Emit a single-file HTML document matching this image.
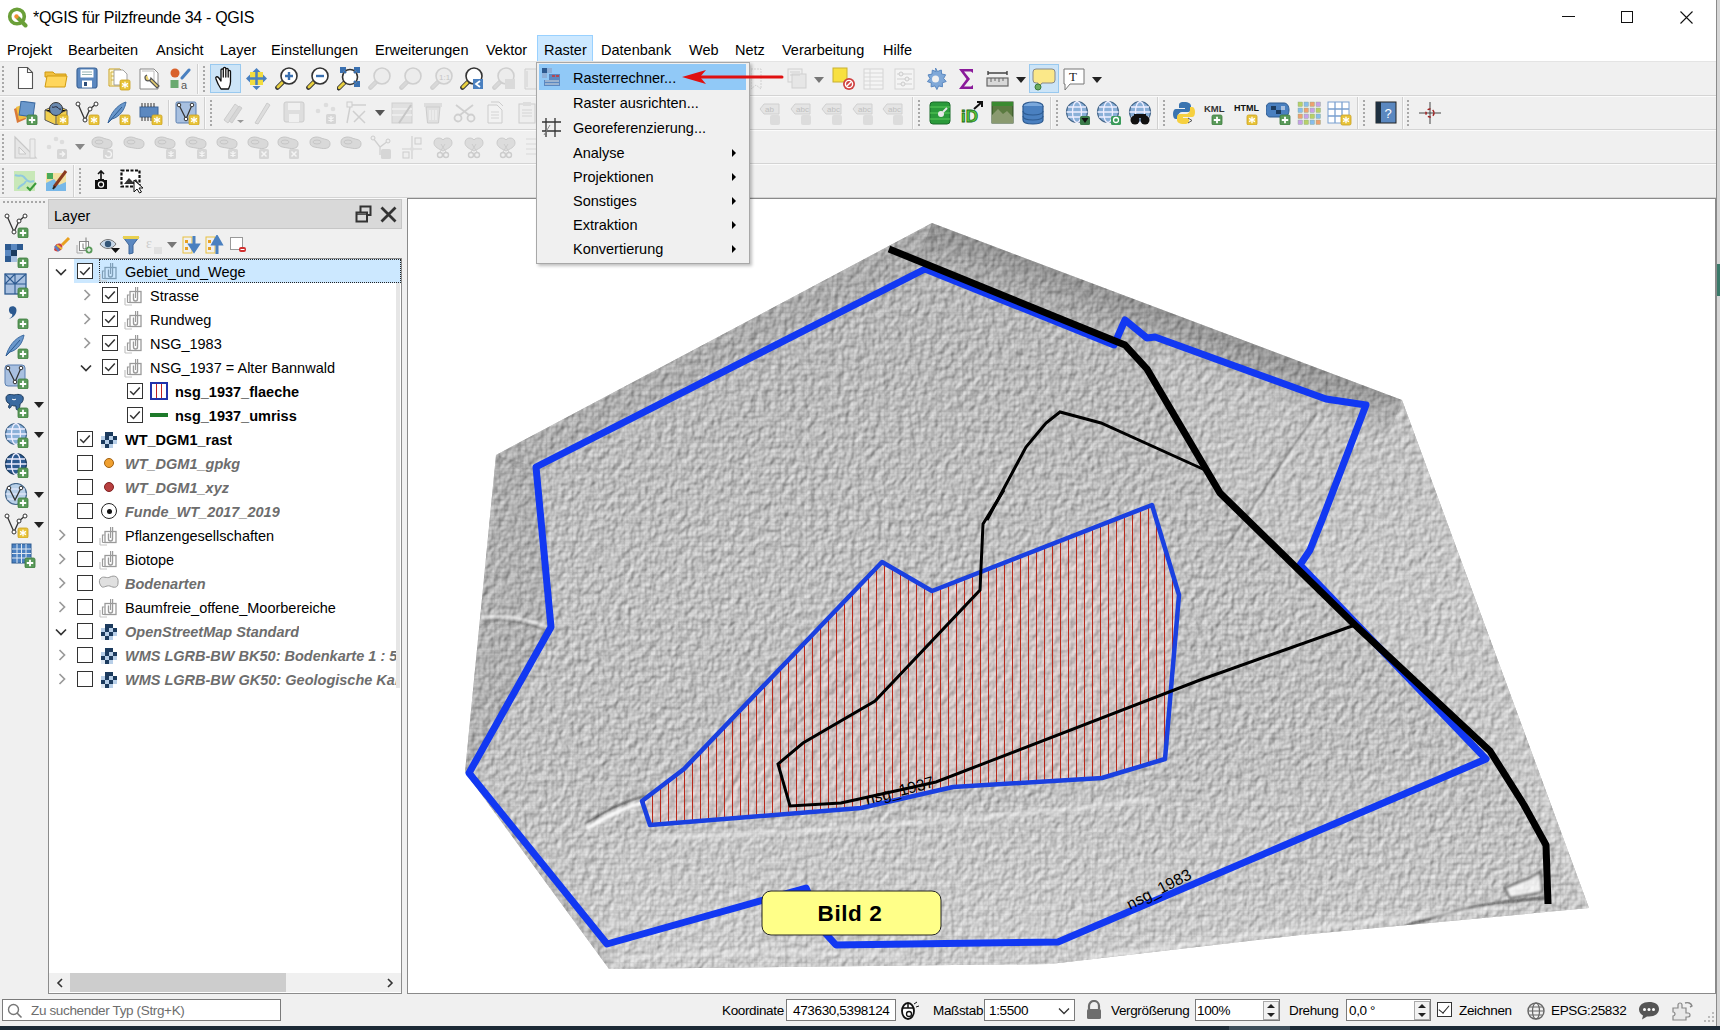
<!DOCTYPE html>
<html><head><meta charset="utf-8">
<style>
*{margin:0;padding:0;box-sizing:border-box}
html,body{width:1720px;height:1030px;overflow:hidden;background:#f0f0f0;font-family:"Liberation Sans",sans-serif;color:#000}
.a{position:absolute}
#title{left:0;top:0;width:1716px;height:35px;background:#fff}
#title .t{left:33px;top:9px;font-size:16px;letter-spacing:-0.3px;color:#000;white-space:nowrap}
#menubar{left:0;top:35px;width:1716px;height:27px;background:#fff}
#menubar span{position:absolute;top:7px;font-size:14.5px;white-space:nowrap}
#tb{left:0;top:62px;width:1716px;height:136px;background:#f0f0f0}
.hl{position:absolute;height:1px;background:#d4d4d4}
.vl{position:absolute;width:1px;background:#d4d4d4}
.grip{position:absolute;width:3px;background-image:radial-gradient(circle,#a0a0a0 0.8px,transparent 1px);background-size:3px 4px}
#layerpanel{left:48px;top:199px;width:355px;height:795px;background:#f0f0f0}
#map{left:407px;top:198px;width:1309px;height:796px;background:#fff;border:1px solid #8a8a8a;overflow:hidden}
#status{left:0;top:995px;width:1716px;height:31px;background:#f0f0f0}
#taskbar{left:0;top:1026px;width:1720px;height:4px;background:#1c2a36}
#menu{left:536px;top:62px;width:214px;height:202px;background:#f0f0f0;border:1px solid #a8a8a8;box-shadow:2px 2px 3px rgba(0,0,0,0.25)}
#menu .it{position:absolute;left:36px;font-size:14.5px;white-space:nowrap}
#menu .ar{position:absolute;left:195px;width:0;height:0;border-left:4px solid #000;border-top:4px solid transparent;border-bottom:4px solid transparent}
.tree{position:absolute;font-size:14.5px;white-space:nowrap}
.cb{position:absolute;width:15px;height:15px;border:1px solid #333;background:#fff}
.cb.on::after{content:"";position:absolute;left:3px;top:0px;width:5px;height:9px;border-right:1.5px solid #222;border-bottom:1.5px solid #222;transform:rotate(40deg)}
.gi{color:#6d6d6d;font-style:italic;font-weight:bold}
.b{font-weight:bold}
.chev{position:absolute;width:7px;height:7px;border-right:1.5px solid #888;border-bottom:1.5px solid #888}
</style></head><body>
<div id="title" class="a">
  <div class="a t">*QGIS für Pilzfreunde 34 - QGIS</div>
</div>
<div id="menubar" class="a">
  <span style="left:7px">Projekt</span>
  <span style="left:68px">Bearbeiten</span>
  <span style="left:156px">Ansicht</span>
  <span style="left:220px">Layer</span>
  <span style="left:271px">Einstellungen</span>
  <span style="left:375px">Erweiterungen</span>
  <span style="left:486px">Vektor</span>
  <div class="a" style="left:537px;top:0;width:56px;height:27px;background:#cce8ff;border:1px solid #99d1ff"></div>
  <span style="left:544px">Raster</span>
  <span style="left:601px">Datenbank</span>
  <span style="left:689px">Web</span>
  <span style="left:735px">Netz</span>
  <span style="left:782px">Verarbeitung</span>
  <span style="left:883px">Hilfe</span>
</div>
<!--TB--><div id="tb" class="a">
<div class="a" style="left:0;top:-1px;width:1716px;height:1px;background:#e4e4e4"></div><div class="a" style="left:0px;top:33px;width:1716px;height:1px;background:#d4d4d4"></div><div class="a" style="left:0px;top:34px;width:1716px;height:1px;background:#fbfbfb"></div><div class="a" style="left:0px;top:67px;width:1716px;height:1px;background:#d4d4d4"></div><div class="a" style="left:0px;top:68px;width:1716px;height:1px;background:#fbfbfb"></div><div class="a" style="left:0px;top:101px;width:1716px;height:1px;background:#d4d4d4"></div><div class="a" style="left:0px;top:102px;width:1716px;height:1px;background:#fbfbfb"></div><div class="a" style="left:0px;top:135px;width:1716px;height:1px;background:#d4d4d4"></div><div class="a" style="left:0px;top:136px;width:1716px;height:1px;background:#fbfbfb"></div>
<div class="a" style="left:2px;top:4px;width:2px;height:26px;background-image:linear-gradient(#a8a8a8 50%,transparent 50%);background-size:2px 4px"></div>
<svg class="a" style="left:17px;top:4px" width="17" height="24" viewBox="0 0 17 24"><path d="M1.5 1.5h9l5 5v16h-14z" fill="#fff" stroke="#555" stroke-width="1.1"/><path d="M10.5 1.5v5h5" fill="none" stroke="#555" stroke-width="1.1"/></svg>
<svg class="a" style="left:44px;top:5px" width="24" height="22" viewBox="0 0 24 22"><path d="M1 5h8l2 2h11v3H1z" fill="#f0c040" stroke="#d09a10" stroke-width="1"/><path d="M1 20l2-11h20l-2 11z" fill="#ffd65c" stroke="#d09a10" stroke-width="1"/></svg>
<svg class="a" style="left:76px;top:5px" width="22" height="22" viewBox="0 0 22 22"><rect x="1" y="1" width="20" height="20" rx="2.5" fill="#5b88c0" stroke="#3d6598" stroke-width="1.2"/><rect x="4.5" y="2.5" width="13" height="8" fill="#fff"/><path d="M6 5h10M6 7.5h10" stroke="#8aa" stroke-width="0.9"/><rect x="6" y="13.5" width="10" height="7" fill="#fff"/><rect x="8" y="15" width="3" height="4" fill="#2d4e7a"/></svg>
<svg class="a" style="left:107px;top:5px" width="24" height="24" viewBox="0 0 24 24"><path d="M2 2h11l4 4v13H2z" fill="#fff8d0" stroke="#c8a020" stroke-width="1"/><path d="M4 5v13M4 5h4M4 9h4M4 13h4" stroke="#d0b040" stroke-width="1"/><path d="M7 3h9l4 4v11H7z" fill="#fff" stroke="#999" stroke-width="0.9"/><rect x="13" y="13" width="10" height="10" rx="1.5" fill="#e8c43a" stroke="#c9a020" stroke-width="0.8"/><path d="M18 14.8v6.4M15 16.4l6 3.2M15 19.6l6 -3.2" stroke="#fff" stroke-width="1.3"/></svg>
<svg class="a" style="left:138px;top:5px" width="24" height="24" viewBox="0 0 24 24"><path d="M2 2h14l4 4v16H2z" fill="#fff" stroke="#888" stroke-width="1"/><path d="M4 4h12v10" fill="none" stroke="#bbb"/><path d="M9 8a3 3 0 1 0 4 3l8 8-2 2-8-8" fill="#e8d070" stroke="#555" stroke-width="1.2"/></svg>
<svg class="a" style="left:169px;top:5px" width="22" height="24" viewBox="0 0 22 24"><circle cx="6" cy="6" r="4.5" fill="#d9612b"/><path d="M13 11L20 3" stroke="#4a80c0" stroke-width="3" stroke-linecap="round"/><rect x="1.5" y="13" width="8" height="8" fill="#6aaa70"/><text x="12" y="22" font-family="Liberation Sans" font-size="11" fill="#555">a</text></svg>
<div class="a" style="left:197px;top:2px;width:1px;height:30px;background:#d0d0d0"></div><div class="a" style="left:198px;top:2px;width:1px;height:30px;background:#fafafa"></div>
<div class="a" style="left:203px;top:4px;width:2px;height:26px;background-image:linear-gradient(#a8a8a8 50%,transparent 50%);background-size:2px 4px"></div>
<div class="a" style="left:210px;top:2px;width:31px;height:29px;background:#cce4f7;border:1px solid #99c9ef"></div>
<svg class="a" style="left:214px;top:4px" width="24" height="26" viewBox="0 0 24 26"><path d="M7 23C5 20 3 16 2 13C1 11 3 10 4.5 11.5L7 15V4C7 2.5 9.3 2.5 9.3 4V11V2.5C9.3 1 11.8 1 11.8 2.5V11V3.5C11.8 2 14.2 2 14.2 3.5V11V5.5C14.2 4 16.5 4 16.5 5.5V16C16.5 19 15.5 21 14.5 23Z" fill="#fff" stroke="#111" stroke-width="1.3" stroke-linejoin="round"/></svg>
<svg class="a" style="left:245px;top:5px" width="23" height="24" viewBox="0 0 23 24"><rect x="5" y="5" width="13" height="13" fill="#f2dc40"/><path d="M11.5 1l4 4h-8zM11.5 23l4-4h-8zM1 11.5l4-4v8zM22 11.5l-4-4v8z" fill="#4a80c0"/><path d="M11.5 5v13M5 11.5h13" stroke="#4a80c0" stroke-width="2.5"/></svg>
<svg class="a" style="left:275px;top:5px" width="24" height="25" viewBox="0 0 24 25"><path d="M8.4 14.6L2.4000000000000004 20.6" stroke="#333" stroke-width="4.5" stroke-linecap="round"/><path d="M7.4 15.6L2.9000000000000004 20.1" stroke="#e8d040" stroke-width="2.8" stroke-linecap="round"/><circle cx="14" cy="9" r="8" fill="#fff" fill-opacity="1" stroke="#333" stroke-width="1.6"/><path d="M14 5v8M10 9h8" stroke="#3a70b0" stroke-width="2.4"/></svg>
<svg class="a" style="left:306px;top:5px" width="24" height="25" viewBox="0 0 24 25"><path d="M8.4 14.6L2.4000000000000004 20.6" stroke="#333" stroke-width="4.5" stroke-linecap="round"/><path d="M7.4 15.6L2.9000000000000004 20.1" stroke="#e8d040" stroke-width="2.8" stroke-linecap="round"/><circle cx="14" cy="9" r="8" fill="#fff" fill-opacity="1" stroke="#333" stroke-width="1.6"/><path d="M10 9h8" stroke="#3a70b0" stroke-width="2.4"/></svg>
<svg class="a" style="left:337px;top:4px" width="25" height="26" viewBox="0 0 25 26"><path d="M7.75 16.25L1.75 22.25" stroke="#333" stroke-width="4.5" stroke-linecap="round"/><path d="M6.75 17.25L2.25 21.75" stroke="#e8d040" stroke-width="2.8" stroke-linecap="round"/><circle cx="13" cy="11" r="7.5" fill="#fff" fill-opacity="1" stroke="#333" stroke-width="1.6"/><path d="M3 1h6v3H6v3H3zM23 1h-6v3h3v3h3zM23 21h-6v-3h3v-3h3z" fill="#3a70b0"/><path d="M5 3l4 4M21 3l-4 4M21 19l-4-4" stroke="#3a70b0" stroke-width="2"/></svg>
<svg class="a" style="left:368px;top:4px" width="24" height="26" viewBox="0 0 24 26"><path d="M8.4 15.6L2.4000000000000004 21.6" stroke="#cfcfcf" stroke-width="4.5" stroke-linecap="round"/><path d="M7.4 16.6L2.9000000000000004 21.1" stroke="#d8d8d8" stroke-width="2.8" stroke-linecap="round"/><circle cx="14" cy="10" r="8" fill="#ececec" fill-opacity="1" stroke="#cfcfcf" stroke-width="1.6"/></svg>
<svg class="a" style="left:399px;top:4px" width="24" height="26" viewBox="0 0 24 26"><path d="M8.4 15.6L2.4000000000000004 21.6" stroke="#cfcfcf" stroke-width="4.5" stroke-linecap="round"/><path d="M7.4 16.6L2.9000000000000004 21.1" stroke="#d8d8d8" stroke-width="2.8" stroke-linecap="round"/><circle cx="14" cy="10" r="8" fill="#ececec" fill-opacity="1" stroke="#cfcfcf" stroke-width="1.6"/></svg>
<svg class="a" style="left:430px;top:4px" width="24" height="26" viewBox="0 0 24 26"><path d="M8.4 15.6L2.4000000000000004 21.6" stroke="#cfcfcf" stroke-width="4.5" stroke-linecap="round"/><path d="M7.4 16.6L2.9000000000000004 21.1" stroke="#d8d8d8" stroke-width="2.8" stroke-linecap="round"/><circle cx="14" cy="10" r="8" fill="#ececec" fill-opacity="1" stroke="#cfcfcf" stroke-width="1.6"/><text x="9" y="14" font-family="Liberation Sans" font-size="8" fill="#c6c6c6">1:1</text></svg>
<svg class="a" style="left:460px;top:4px" width="25" height="26" viewBox="0 0 25 26"><path d="M8.4 15.6L2.4000000000000004 21.6" stroke="#333" stroke-width="4.5" stroke-linecap="round"/><path d="M7.4 16.6L2.9000000000000004 21.1" stroke="#e8d040" stroke-width="2.8" stroke-linecap="round"/><circle cx="14" cy="10" r="8" fill="#fff" fill-opacity="1" stroke="#333" stroke-width="1.6"/><rect x="13" y="13" width="10" height="10" fill="#4a80c0"/><path d="M20 15l-4 3l4 3" fill="none" stroke="#fff" stroke-width="1.8"/></svg>
<svg class="a" style="left:492px;top:4px" width="24" height="26" viewBox="0 0 24 26"><path d="M8.4 15.6L2.4000000000000004 21.6" stroke="#cfcfcf" stroke-width="4.5" stroke-linecap="round"/><path d="M7.4 16.6L2.9000000000000004 21.1" stroke="#d8d8d8" stroke-width="2.8" stroke-linecap="round"/><circle cx="14" cy="10" r="8" fill="#ececec" fill-opacity="1" stroke="#cfcfcf" stroke-width="1.6"/><rect x="13" y="13" width="10" height="10" fill="#dadada"/></svg>
<svg class="a" style="left:524px;top:5px" width="13" height="24" viewBox="0 0 13 24"><path d="M1 2h12v20H1z" fill="#ececec" stroke="#d0d0d0"/><path d="M3 4v16" stroke="#d0d0d0"/></svg>
<svg class="a" style="left:751px;top:5px" width="12" height="24" viewBox="0 0 12 24"><path d="M0 2h10v20l-5-4l-5 4z" fill="none" stroke="#d0d0d0" stroke-width="1" stroke-dasharray="2 1"/></svg>
<svg class="a" style="left:787px;top:6px" width="20" height="22" viewBox="0 0 20 22"><rect x="1" y="1" width="14" height="13" fill="#eee" stroke="#d0d0d0"/><rect x="5" y="6" width="14" height="14" fill="#e6e6e6" stroke="#cfcfcf"/><path d="M3 4h10M3 7h10" stroke="#d0d0d0"/></svg>
<svg class="a" style="left:814px;top:15px" width="10" height="6" viewBox="0 0 10 6"><path d="M0 0h10L5 6z" fill="#777"/></svg>
<svg class="a" style="left:832px;top:5px" width="24" height="24" viewBox="0 0 24 24"><rect x="1" y="1" width="14" height="14" fill="#f8e040" stroke="#c8b030"/><circle cx="17" cy="17" r="6" fill="#d04040"/><circle cx="17" cy="17" r="3.6" fill="none" stroke="#fff" stroke-width="1.4"/><path d="M14.5 19.5l5-5" stroke="#fff" stroke-width="1.4"/></svg>
<svg class="a" style="left:863px;top:6px" width="21" height="22" viewBox="0 0 21 22"><rect x="1" y="1" width="19" height="20" fill="#f4f4f4" stroke="#d4d4d4"/><path d="M1 5h19M1 9h19M1 13h19M1 17h19M7 1v20" stroke="#d8d8d8"/></svg>
<svg class="a" style="left:894px;top:6px" width="21" height="22" viewBox="0 0 21 22"><rect x="1" y="1" width="19" height="20" fill="#f4f4f4" stroke="#d4d4d4"/><path d="M3 6h15M3 11h15M3 16h15" stroke="#d0d0d0"/><circle cx="7" cy="6" r="2" fill="#eee" stroke="#ccc"/><circle cx="13" cy="11" r="2" fill="#eee" stroke="#ccc"/><circle cx="9" cy="16" r="2" fill="#eee" stroke="#ccc"/></svg>
<svg class="a" style="left:924px;top:5px" width="23" height="23" viewBox="0 0 23 23"><path d="M11.5 1l2 3.5l3.8-1.5l0.3 4l4 0.8l-2 3.7l2.6 3l-3.9 1.3l0.2 4l-3.9-0.9l-1.7 3.6l-1.9-3.6l-3.9 1l0.2-4l-3.9-1.3l2.6-3l-2-3.7l4-0.8l0.3-4l3.8 1.5z" fill="#7fa8d8" stroke="#5a88c0" stroke-width="1"/><circle cx="11.5" cy="12" r="3.5" fill="#f0f0f0"/></svg>
<svg class="a" style="left:958px;top:6px" width="16" height="22" viewBox="0 0 16 22"><path d="M1 1h14v4l-2 -1.5H6l6 7.5l-6 7.5h7l2 -1.5v4H1l7.5-10z" fill="#8a1a9a"/></svg>
<svg class="a" style="left:986px;top:7px" width="23" height="20" viewBox="0 0 23 20"><path d="M2 4h19M2 2v4M21 2v4" stroke="#444" stroke-width="1.4"/><rect x="1" y="9" width="21" height="8" fill="#d8d8d8" stroke="#666" stroke-width="1.2"/><path d="M5 9v4M9 9v3M13 9v4M17 9v3" stroke="#666" stroke-width="1"/></svg>
<svg class="a" style="left:1016px;top:15px" width="10" height="6" viewBox="0 0 10 6"><path d="M0 0h10L5 6z" fill="#222"/></svg>
<div class="a" style="left:1029px;top:2px;width:30px;height:29px;background:#cce4f7;border:1px solid #99c9ef"></div>
<svg class="a" style="left:1032px;top:6px" width="24" height="23" viewBox="0 0 24 23"><path d="M4 1h16a3 3 0 0 1 3 3v8a3 3 0 0 1-3 3H10l-4 5v-5H4a3 3 0 0 1-3-3V4a3 3 0 0 1 3-3z" fill="#fbe889" stroke="#888" stroke-width="1"/><circle cx="6" cy="19" r="3" fill="#6aaa60" stroke="#3a7a3a"/></svg>
<svg class="a" style="left:1062px;top:6px" width="24" height="23" viewBox="0 0 24 23"><path d="M2 1h20v15H8l-5 6v-6H2z" fill="#fff" stroke="#777" stroke-width="1"/><text x="7" y="13" font-family="Liberation Serif" font-size="13" fill="#222">T</text></svg>
<svg class="a" style="left:1092px;top:15px" width="10" height="6" viewBox="0 0 10 6"><path d="M0 0h10L5 6z" fill="#222"/></svg>
<div class="a" style="left:2px;top:38px;width:2px;height:26px;background-image:linear-gradient(#a8a8a8 50%,transparent 50%);background-size:2px 4px"></div>
<svg class="a" style="left:13px;top:39px" width="25" height="24" viewBox="0 0 25 24"><path d="M1 8l9-4l3 14l-9 4z" fill="#d97a3a"/><path d="M3 6l9-3l3 13l-9 3z" fill="#f2c040"/><rect x="7" y="1" width="14" height="14" transform="rotate(8 14 8)" fill="#6a98cc" stroke="#3d6aa0"/><rect x="14" y="14" width="10" height="10" rx="1.5" fill="#5a9a5a" stroke="#3a7a3a" stroke-width="0.8"/><path d="M19 15.8v6.4M15.8 19h6.4" stroke="#fff" stroke-width="1.8"/></svg>
<svg class="a" style="left:44px;top:39px" width="25" height="24" viewBox="0 0 25 24"><path d="M1 9l11-5l11 5v10l-11 5l-11-5z" fill="#f2d050" stroke="#555" stroke-width="1"/><path d="M1 9l11 5l11-5M12 14v10" stroke="#555" stroke-width="1"/><circle cx="12" cy="8" r="6.5" fill="#6a8ab0" stroke="#333"/><path d="M8 6c2 1 3-1 5 0s2 3 4 2" stroke="#223" fill="none"/><rect x="14" y="14" width="10" height="10" rx="1.5" fill="#e8c43a" stroke="#c9a020" stroke-width="0.8"/><path d="M19 15.8v6.4M16 17.4l6 3.2M16 20.6l6 -3.2" stroke="#fff" stroke-width="1.3"/></svg>
<svg class="a" style="left:75px;top:39px" width="25" height="24" viewBox="0 0 25 24"><path d="M3 3l7 16l5-11l6 -5" fill="none" stroke="#333" stroke-width="1.3"/><circle cx="3" cy="3" r="2" fill="#fff" stroke="#333"/><circle cx="10" cy="19" r="2" fill="#fff" stroke="#333"/><circle cx="15" cy="8" r="2" fill="#fff" stroke="#333"/><circle cx="21" cy="3" r="2" fill="#fff" stroke="#333"/><rect x="14" y="14" width="10" height="10" rx="1.5" fill="#e8c43a" stroke="#c9a020" stroke-width="0.8"/><path d="M19 15.8v6.4M16 17.4l6 3.2M16 20.6l6 -3.2" stroke="#fff" stroke-width="1.3"/></svg>
<svg class="a" style="left:106px;top:39px" width="25" height="24" viewBox="0 0 25 24"><path d="M2 22C4 14 10 4 20 1C19 8 14 16 6 18z" fill="#6a98cc" stroke="#3d6aa0"/><path d="M2 22L16 6" stroke="#2d5a90" stroke-width="1"/><rect x="14" y="14" width="10" height="10" rx="1.5" fill="#e8c43a" stroke="#c9a020" stroke-width="0.8"/><path d="M19 15.8v6.4M16 17.4l6 3.2M16 20.6l6 -3.2" stroke="#fff" stroke-width="1.3"/></svg>
<svg class="a" style="left:138px;top:39px" width="25" height="24" viewBox="0 0 25 24"><rect x="2" y="6" width="18" height="10" fill="#5b88c0" stroke="#3d6598"/><path d="M4 2v4M7 2v4M10 2v4M13 2v4M16 2v4M4 16v4M7 16v4M10 16v4M13 16v4M16 16v4" stroke="#333" stroke-width="1"/><rect x="14" y="14" width="10" height="10" rx="1.5" fill="#e8c43a" stroke="#c9a020" stroke-width="0.8"/><path d="M19 15.8v6.4M16 17.4l6 3.2M16 20.6l6 -3.2" stroke="#fff" stroke-width="1.3"/></svg>
<div class="a" style="left:168px;top:38px;width:1px;height:26px;background:#d0d0d0"></div><div class="a" style="left:169px;top:38px;width:1px;height:26px;background:#fafafa"></div>
<svg class="a" style="left:175px;top:39px" width="25" height="24" viewBox="0 0 25 24"><rect x="1" y="1" width="20" height="21" rx="1.5" fill="#a8c0e0" stroke="#5a7fb0"/><path d="M4 4l7 14l6-14" fill="none" stroke="#333" stroke-width="1.2"/><circle cx="4" cy="4" r="1.8" fill="#fff" stroke="#333"/><circle cx="11" cy="18" r="1.8" fill="#fff" stroke="#333"/><circle cx="17" cy="4" r="1.8" fill="#fff" stroke="#333"/><rect x="14" y="14" width="10" height="10" rx="1.5" fill="#e8c43a" stroke="#c9a020" stroke-width="0.8"/><path d="M19 15.8v6.4M16 17.4l6 3.2M16 20.6l6 -3.2" stroke="#fff" stroke-width="1.3"/></svg>
<div class="a" style="left:204px;top:35px;width:1px;height:32px;background:#d0d0d0"></div><div class="a" style="left:205px;top:35px;width:1px;height:32px;background:#fafafa"></div>
<div class="a" style="left:210px;top:38px;width:2px;height:26px;background-image:linear-gradient(#a8a8a8 50%,transparent 50%);background-size:2px 4px"></div>
<svg class="a" style="left:221px;top:39px" width="25" height="24" viewBox="0 0 25 24"><path d="M3 19L14 3l4 3L7 22z" fill="#ddd" stroke="#ccc"/><path d="M8 20L18 5l3 2L11 22z" fill="#d6d6d6" stroke="#ccc"/><path d="M16 19h7l-3.5 3z" fill="#999"/></svg>
<svg class="a" style="left:253px;top:39px" width="18" height="24" viewBox="0 0 18 24"><path d="M2 22L14 2l3 2L5 23z" fill="#ddd" stroke="#ccc"/></svg>
<svg class="a" style="left:283px;top:39px" width="23" height="23" viewBox="0 0 23 23"><rect x="1" y="1" width="20" height="20" rx="2" fill="#dedede" stroke="#ccc"/><rect x="5" y="2" width="12" height="7" fill="#f0f0f0"/><rect x="6" y="13" width="10" height="8" fill="#f0f0f0"/></svg>
<svg class="a" style="left:314px;top:39px" width="24" height="24" viewBox="0 0 24 24"><circle cx="4" cy="10" r="2.3" fill="#ddd"/><circle cx="12" cy="4" r="2.3" fill="#ddd"/><circle cx="19" cy="8" r="2.3" fill="#ddd"/><rect x="12" y="13" width="10" height="10" rx="1.5" fill="#d6d6d6"/><path d="M17 15v6M14.4 16.5l5.2 3M14.4 19.5l5.2 -3" stroke="#f4f4f4" stroke-width="1.3"/></svg>
<svg class="a" style="left:346px;top:39px" width="22" height="24" viewBox="0 0 22 24"><rect x="1" y="1" width="5" height="5" fill="none" stroke="#ccc"/><path d="M4 6L1 22M6 4h14M7 10l12 12M19 10L8 21" stroke="#cfcfcf" stroke-width="1.5"/></svg>
<svg class="a" style="left:375px;top:48px" width="10" height="6" viewBox="0 0 10 6"><path d="M0 0h10L5 6z" fill="#555"/></svg>
<svg class="a" style="left:391px;top:39px" width="22" height="24" viewBox="0 0 22 24"><rect x="1" y="2" width="20" height="20" fill="#e0e0e0" stroke="#cfcfcf"/><path d="M1 8h20M1 14h20" stroke="#f0f0f0" stroke-width="1.5"/><path d="M8 22L20 4" stroke="#c6c6c6" stroke-width="2"/></svg>
<svg class="a" style="left:423px;top:39px" width="20" height="24" viewBox="0 0 20 24"><rect x="1" y="2" width="18" height="4" fill="#ddd"/><path d="M3 6h14l-1.5 16h-11z" fill="#e0e0e0" stroke="#ccc"/><path d="M7 9v10M10 9v10M13 9v10" stroke="#f2f2f2" stroke-width="1.2"/></svg>
<svg class="a" style="left:453px;top:41px" width="23" height="20" viewBox="0 0 23 20"><circle cx="5" cy="15" r="3.5" fill="none" stroke="#cfcfcf" stroke-width="1.8"/><circle cx="18" cy="15" r="3.5" fill="none" stroke="#cfcfcf" stroke-width="1.8"/><path d="M7 12L20 2M16 12L3 2" stroke="#d0d0d0" stroke-width="1.8"/></svg>
<svg class="a" style="left:487px;top:39px" width="17" height="23" viewBox="0 0 17 23"><path d="M1 4h9l5 5v13H1z" fill="#f2f2f2" stroke="#ccc"/><path d="M4 1h8l4 4" fill="none" stroke="#ccc"/><path d="M4 11h8M4 14h8M4 17h8" stroke="#d4d4d4"/></svg>
<svg class="a" style="left:518px;top:39px" width="18" height="23" viewBox="0 0 18 23"><rect x="1" y="3" width="16" height="19" fill="#eee" stroke="#ccc"/><rect x="5" y="1" width="8" height="4" fill="#ddd"/><path d="M4 9h10M4 12h10M4 15h10" stroke="#d4d4d4"/></svg>
<svg class="a" style="left:759px;top:40px" width="24" height="24" viewBox="0 0 24 24"><path d="M5 2h15v10H5L1 7z" fill="#e4e4e4" stroke="#d0d0d0"/><text x="6" y="10" font-family="Liberation Sans" font-size="8" fill="#c0c0c0">ab</text><rect x="11" y="13" width="10" height="10" rx="2" fill="#dcdcdc"/></svg>
<svg class="a" style="left:790px;top:40px" width="24" height="24" viewBox="0 0 24 24"><path d="M5 2h15v10H5L1 7z" fill="#e4e4e4" stroke="#d0d0d0"/><text x="6" y="10" font-family="Liberation Sans" font-size="8" fill="#c0c0c0">abc</text><rect x="11" y="13" width="10" height="10" rx="2" fill="#dcdcdc"/></svg>
<svg class="a" style="left:821px;top:40px" width="24" height="24" viewBox="0 0 24 24"><path d="M5 2h15v10H5L1 7z" fill="#e4e4e4" stroke="#d0d0d0"/><text x="6" y="10" font-family="Liberation Sans" font-size="8" fill="#c0c0c0">abc</text><rect x="11" y="13" width="10" height="10" rx="2" fill="#dcdcdc"/></svg>
<svg class="a" style="left:852px;top:40px" width="24" height="24" viewBox="0 0 24 24"><path d="M5 2h15v10H5L1 7z" fill="#e4e4e4" stroke="#d0d0d0"/><text x="6" y="10" font-family="Liberation Sans" font-size="8" fill="#c0c0c0">abc</text><rect x="11" y="13" width="10" height="10" rx="2" fill="#dcdcdc"/></svg>
<svg class="a" style="left:882px;top:40px" width="24" height="24" viewBox="0 0 24 24"><path d="M5 2h15v10H5L1 7z" fill="#e4e4e4" stroke="#d0d0d0"/><text x="6" y="10" font-family="Liberation Sans" font-size="8" fill="#c0c0c0">abc</text><rect x="11" y="13" width="10" height="10" rx="2" fill="#dcdcdc"/></svg>
<div class="a" style="left:912px;top:35px;width:1px;height:32px;background:#d0d0d0"></div><div class="a" style="left:913px;top:35px;width:1px;height:32px;background:#fafafa"></div>
<div class="a" style="left:918px;top:38px;width:2px;height:26px;background-image:linear-gradient(#a8a8a8 50%,transparent 50%);background-size:2px 4px"></div>
<svg class="a" style="left:929px;top:39px" width="22" height="24" viewBox="0 0 22 24"><rect x="1" y="1" width="20" height="22" rx="3" fill="#2a9a3a" stroke="#186a28"/><path d="M1 6h20M1 12h20M1 18h20" stroke="#5acb5a" stroke-width="1"/><circle cx="12" cy="13" r="3" fill="#e8e8e8"/><path d="M14 11l4-4" stroke="#e8e8e8" stroke-width="2"/></svg>
<svg class="a" style="left:960px;top:38px" width="24" height="25" viewBox="0 0 24 25"><text x="1" y="22" font-family="Liberation Sans" font-weight="bold" font-size="17" fill="#5acb3a" stroke="#1a6a1a" stroke-width="0.8">iD</text><path d="M14 9L22 2M17 2h5v5" fill="none" stroke="#111" stroke-width="2"/></svg>
<svg class="a" style="left:991px;top:39px" width="23" height="23" viewBox="0 0 23 23"><rect x="1" y="1" width="21" height="21" fill="#5a7a40" stroke="#2a4a20"/><rect x="1" y="1" width="21" height="4" fill="#3a8a30"/><path d="M1 14l6-6l5 5l4-3l6 6v6H1z" fill="#8a9a70"/></svg>
<svg class="a" style="left:1021px;top:39px" width="24" height="24" viewBox="0 0 24 24"><ellipse cx="12" cy="5" rx="10" ry="4" fill="#7aa8dc" stroke="#2d5a90" stroke-width="1.2"/><path d="M2 5v14c0 2.5 4.5 4 10 4s10-1.5 10-4V5" fill="#4a80c0" stroke="#2d5a90" stroke-width="1.2"/><path d="M2 10c0 2.5 4.5 4 10 4s10-1.5 10-4M2 15c0 2.5 4.5 4 10 4s10-1.5 10-4" fill="none" stroke="#2d5a90" stroke-width="1.2"/></svg>
<div class="a" style="left:1050px;top:35px;width:1px;height:32px;background:#d0d0d0"></div><div class="a" style="left:1051px;top:35px;width:1px;height:32px;background:#fafafa"></div>
<div class="a" style="left:1056px;top:38px;width:2px;height:26px;background-image:linear-gradient(#a8a8a8 50%,transparent 50%);background-size:2px 4px"></div>
<svg class="a" style="left:1065px;top:39px" width="26" height="25" viewBox="0 0 26 25"><circle cx="12" cy="11" r="10.5" fill="#8ab0d8" stroke="#44668a" stroke-width="1.2"/><ellipse cx="12" cy="11" rx="4.5" ry="10.5" fill="none" stroke="#eef" stroke-width="1.3"/><path d="M1.5 11h21M3 6h18M3 16h18" stroke="#eef" stroke-width="1.3"/><rect x="15" y="15" width="10" height="9" rx="1.5" fill="#3a7a4a"/><path d="M16.5 17h7l-3.5 5z" fill="#111"/></svg>
<svg class="a" style="left:1096px;top:39px" width="26" height="25" viewBox="0 0 26 25"><circle cx="12" cy="11" r="10.5" fill="#8ab0d8" stroke="#44668a" stroke-width="1.2"/><ellipse cx="12" cy="11" rx="4.5" ry="10.5" fill="none" stroke="#eef" stroke-width="1.3"/><path d="M1.5 11h21M3 6h18M3 16h18" stroke="#eef" stroke-width="1.3"/><rect x="15" y="15" width="10" height="9" rx="1.5" fill="#3a9a5a"/><circle cx="20" cy="19" r="2.5" fill="none" stroke="#fff" stroke-width="1.3"/></svg>
<svg class="a" style="left:1128px;top:39px" width="26" height="25" viewBox="0 0 26 25"><circle cx="12" cy="11" r="10.5" fill="#8ab0d8" stroke="#44668a" stroke-width="1.2"/><ellipse cx="12" cy="11" rx="4.5" ry="10.5" fill="none" stroke="#eef" stroke-width="1.3"/><path d="M1.5 11h21M3 6h18M3 16h18" stroke="#eef" stroke-width="1.3"/><circle cx="7" cy="19" r="4.5" fill="#111"/><circle cx="17" cy="19" r="4.5" fill="#111"/><rect x="6" y="13" width="12" height="4" fill="#111"/></svg>
<div class="a" style="left:1157px;top:35px;width:1px;height:32px;background:#d0d0d0"></div><div class="a" style="left:1158px;top:35px;width:1px;height:32px;background:#fafafa"></div>
<div class="a" style="left:1163px;top:38px;width:2px;height:26px;background-image:linear-gradient(#a8a8a8 50%,transparent 50%);background-size:2px 4px"></div>
<svg class="a" style="left:1173px;top:39px" width="24" height="24" viewBox="0 0 24 24"><path d="M11 1c-5 0-5 2-5 4v2h6v1H3C1 8 0 10 0 13s1 5 3 5h2v-3c0-2 2-4 4-4h6c2 0 3-1 3-3V5c0-2-2-4-7-4z" fill="#3a74b0"/><path d="M11 23c5 0 5-2 5-4v-2h-6v-1h9c2 0 3-2 3-5s-1-5-3-5h-2v3c0 2-2 4-4 4H7c-2 0-3 1-3 3v3c0 2 2 4 7 4z" fill="#f6d040"/><path d="M15 17l4 2.5l-4 2.5" fill="none" stroke="#555" stroke-width="1"/></svg>
<svg class="a" style="left:1204px;top:39px" width="24" height="24" viewBox="0 0 24 24"><text x="0" y="11" font-family="Liberation Sans" font-weight="bold" font-size="9.5" fill="#333">KML</text><rect x="8" y="14" width="10" height="10" rx="1.5" fill="#5a9a5a" stroke="#3a7a3a" stroke-width="0.8"/><path d="M13 15.8v6.4M9.8 19h6.4" stroke="#fff" stroke-width="1.8"/></svg>
<svg class="a" style="left:1234px;top:39px" width="27" height="24" viewBox="0 0 27 24"><text x="0" y="10" font-family="Liberation Sans" font-weight="bold" font-size="9" fill="#111">HTML</text><rect x="13" y="14" width="10" height="10" rx="1.5" fill="#e8c43a" stroke="#c9a020" stroke-width="0.8"/><path d="M18 15.8v6.4M15 17.4l6 3.2M15 20.6l6 -3.2" stroke="#fff" stroke-width="1.3"/></svg>
<svg class="a" style="left:1266px;top:39px" width="25" height="24" viewBox="0 0 25 24"><path d="M4 2h14c3 0 5 3 5 7s-2 7-5 7H4c-3 0-4-3-4-7s1-7 4-7z" fill="#4a80c0" stroke="#2d5a90"/><rect x="5" y="5" width="5" height="4" fill="#1c3b5e"/><rect x="10" y="9" width="5" height="4" fill="#1c3b5e"/><rect x="15" y="5" width="4" height="4" fill="#a8c0e0"/><rect x="14" y="14" width="10" height="10" rx="1.5" fill="#5a9a5a" stroke="#3a7a3a" stroke-width="0.8"/><path d="M19 15.8v6.4M15.8 19h6.4" stroke="#fff" stroke-width="1.8"/></svg>
<svg class="a" style="left:1297px;top:39px" width="25" height="25" viewBox="0 0 25 25"><rect x="1" y="1" width="4.5" height="4.5" fill="#b8d068" stroke="#8a8" stroke-width="0.4"/><rect x="7" y="1" width="4.5" height="4.5" fill="#88bcec" stroke="#8a8" stroke-width="0.4"/><rect x="13" y="1" width="4.5" height="4.5" fill="#eea070" stroke="#8a8" stroke-width="0.4"/><rect x="19" y="1" width="4.5" height="4.5" fill="#c8a0e8" stroke="#8a8" stroke-width="0.4"/><rect x="1" y="7" width="4.5" height="4.5" fill="#88bcec" stroke="#8a8" stroke-width="0.4"/><rect x="7" y="7" width="4.5" height="4.5" fill="#eea070" stroke="#8a8" stroke-width="0.4"/><rect x="13" y="7" width="4.5" height="4.5" fill="#c8a0e8" stroke="#8a8" stroke-width="0.4"/><rect x="19" y="7" width="4.5" height="4.5" fill="#b8d068" stroke="#8a8" stroke-width="0.4"/><rect x="1" y="13" width="4.5" height="4.5" fill="#eea070" stroke="#8a8" stroke-width="0.4"/><rect x="7" y="13" width="4.5" height="4.5" fill="#c8a0e8" stroke="#8a8" stroke-width="0.4"/><rect x="13" y="13" width="4.5" height="4.5" fill="#b8d068" stroke="#8a8" stroke-width="0.4"/><rect x="19" y="13" width="4.5" height="4.5" fill="#88bcec" stroke="#8a8" stroke-width="0.4"/><rect x="1" y="19" width="4.5" height="4.5" fill="#c8a0e8" stroke="#8a8" stroke-width="0.4"/><rect x="7" y="19" width="4.5" height="4.5" fill="#b8d068" stroke="#8a8" stroke-width="0.4"/><rect x="13" y="19" width="4.5" height="4.5" fill="#88bcec" stroke="#8a8" stroke-width="0.4"/><rect x="19" y="19" width="4.5" height="4.5" fill="#eea070" stroke="#8a8" stroke-width="0.4"/></svg>
<svg class="a" style="left:1327px;top:39px" width="25" height="25" viewBox="0 0 25 25"><rect x="1" y="1" width="21" height="21" fill="#fff" stroke="#7aa0d0"/><path d="M8 1v21M15 1v21M1 8h21M1 15h21" stroke="#7aa0d0" stroke-width="1.3"/><rect x="14" y="14" width="10" height="10" rx="1.5" fill="#e8c43a" stroke="#c9a020" stroke-width="0.8"/><path d="M19 15.8v6.4M16 17.4l6 3.2M16 20.6l6 -3.2" stroke="#fff" stroke-width="1.3"/></svg>
<div class="a" style="left:1357px;top:35px;width:1px;height:32px;background:#d0d0d0"></div><div class="a" style="left:1358px;top:35px;width:1px;height:32px;background:#fafafa"></div>
<div class="a" style="left:1363px;top:38px;width:2px;height:26px;background-image:linear-gradient(#a8a8a8 50%,transparent 50%);background-size:2px 4px"></div>
<svg class="a" style="left:1375px;top:39px" width="22" height="23" viewBox="0 0 22 23"><rect x="1" y="1" width="20" height="21" fill="#5b88c0" stroke="#222" stroke-width="1"/><rect x="1" y="1" width="5" height="21" fill="#1e3040"/><text x="9.5" y="17" font-family="Liberation Sans" font-size="13" fill="#fff">?</text></svg>
<div class="a" style="left:1402px;top:35px;width:1px;height:32px;background:#d0d0d0"></div><div class="a" style="left:1403px;top:35px;width:1px;height:32px;background:#fafafa"></div>
<div class="a" style="left:1407px;top:38px;width:2px;height:26px;background-image:linear-gradient(#a8a8a8 50%,transparent 50%);background-size:2px 4px"></div>
<svg class="a" style="left:1418px;top:39px" width="24" height="24" viewBox="0 0 24 24"><path d="M12 1v22M1 12h22" stroke="#444" stroke-width="1"/><circle cx="12" cy="12" r="4" fill="none" stroke="#a02020" stroke-width="1.5" stroke-dasharray="3 2.3"/></svg>
<div class="a" style="left:2px;top:72px;width:2px;height:26px;background-image:linear-gradient(#a8a8a8 50%,transparent 50%);background-size:2px 4px"></div>
<svg class="a" style="left:13px;top:73px" width="25" height="25" viewBox="0 0 25 25"><path d="M2 2v21h21z" fill="#e6e6e6" stroke="#c8c8c8" stroke-width="1.2"/><path d="M6 12v7h7z" fill="#f0f0f0" stroke="#c8c8c8"/><path d="M17 4h5v19h-5z" fill="#ececec" stroke="#cfcfcf"/></svg>
<svg class="a" style="left:45px;top:73px" width="24" height="25" viewBox="0 0 24 25"><circle cx="4" cy="12" r="2.3" fill="#ddd"/><circle cx="11" cy="4" r="2.3" fill="#ddd"/><circle cx="17" cy="7" r="2.3" fill="#ddd"/><rect x="12" y="14" width="10" height="10" rx="1.5" fill="#d6d6d6"/><path d="M14.5 19h5M17 16.5l2.5 2.5l-2.5 2.5" fill="none" stroke="#f4f4f4" stroke-width="1.5"/></svg>
<svg class="a" style="left:75px;top:82px" width="10" height="6" viewBox="0 0 10 6"><path d="M0 0h10L5 6z" fill="#888"/></svg>
<svg class="a" style="left:90px;top:73px" width="24" height="26" viewBox="0 0 24 26"><path d="M2 7C2 2 9 1 13 3C18 5 22 4 22 9C22 14 16 14 12 13C6 12 2 12 2 7Z" fill="#d9d9d9" stroke="#c6c6c6" stroke-width="1"/><ellipse cx="9" cy="7" rx="4" ry="2" fill="none" stroke="#c6c6c6"/><rect x="13" y="14" width="10" height="10" rx="1.5" fill="#d6d6d6"/><path d="M15.5 20a3 3 0 1 0 2 -3.5" fill="none" stroke="#f4f4f4" stroke-width="1.5"/></svg>
<svg class="a" style="left:122px;top:73px" width="24" height="26" viewBox="0 0 24 26"><path d="M2 7C2 2 9 1 13 3C18 5 22 4 22 9C22 14 16 14 12 13C6 12 2 12 2 7Z" fill="#d9d9d9" stroke="#c6c6c6" stroke-width="1"/><ellipse cx="9" cy="7" rx="4" ry="2" fill="none" stroke="#c6c6c6"/></svg>
<svg class="a" style="left:153px;top:73px" width="24" height="26" viewBox="0 0 24 26"><path d="M2 7C2 2 9 1 13 3C18 5 22 4 22 9C22 14 16 14 12 13C6 12 2 12 2 7Z" fill="#d9d9d9" stroke="#c6c6c6" stroke-width="1"/><ellipse cx="9" cy="7" rx="4" ry="2" fill="none" stroke="#c6c6c6"/><rect x="13" y="14" width="10" height="10" rx="1.5" fill="#d6d6d6"/><path d="M18 16v6M15.4 17.5l5.2 3M15.4 20.5l5.2 -3" stroke="#f4f4f4" stroke-width="1.3"/></svg>
<svg class="a" style="left:184px;top:73px" width="24" height="26" viewBox="0 0 24 26"><path d="M2 7C2 2 9 1 13 3C18 5 22 4 22 9C22 14 16 14 12 13C6 12 2 12 2 7Z" fill="#d9d9d9" stroke="#c6c6c6" stroke-width="1"/><ellipse cx="9" cy="7" rx="4" ry="2" fill="none" stroke="#c6c6c6"/><rect x="13" y="14" width="10" height="10" rx="1.5" fill="#d6d6d6"/><path d="M18 16v6M15.4 17.5l5.2 3M15.4 20.5l5.2 -3" stroke="#f4f4f4" stroke-width="1.3"/></svg>
<svg class="a" style="left:215px;top:73px" width="24" height="26" viewBox="0 0 24 26"><path d="M2 7C2 2 9 1 13 3C18 5 22 4 22 9C22 14 16 14 12 13C6 12 2 12 2 7Z" fill="#d9d9d9" stroke="#c6c6c6" stroke-width="1"/><ellipse cx="9" cy="7" rx="4" ry="2" fill="none" stroke="#c6c6c6"/><rect x="13" y="14" width="10" height="10" rx="1.5" fill="#d6d6d6"/><path d="M18 16v6M15.4 17.5l5.2 3M15.4 20.5l5.2 -3" stroke="#f4f4f4" stroke-width="1.3"/></svg>
<svg class="a" style="left:246px;top:73px" width="24" height="26" viewBox="0 0 24 26"><path d="M2 7C2 2 9 1 13 3C18 5 22 4 22 9C22 14 16 14 12 13C6 12 2 12 2 7Z" fill="#d9d9d9" stroke="#c6c6c6" stroke-width="1"/><ellipse cx="9" cy="7" rx="4" ry="2" fill="none" stroke="#c6c6c6"/><rect x="13" y="14" width="10" height="10" rx="1.5" fill="#d6d6d6"/><path d="M15.5 16.5l5 5M20.5 16.5l-5 5" stroke="#f4f4f4" stroke-width="1.5"/></svg>
<svg class="a" style="left:276px;top:73px" width="24" height="26" viewBox="0 0 24 26"><path d="M2 7C2 2 9 1 13 3C18 5 22 4 22 9C22 14 16 14 12 13C6 12 2 12 2 7Z" fill="#d9d9d9" stroke="#c6c6c6" stroke-width="1"/><ellipse cx="9" cy="7" rx="4" ry="2" fill="none" stroke="#c6c6c6"/><rect x="13" y="14" width="10" height="10" rx="1.5" fill="#d6d6d6"/><path d="M15.5 16.5l5 5M20.5 16.5l-5 5" stroke="#f4f4f4" stroke-width="1.5"/></svg>
<svg class="a" style="left:308px;top:73px" width="24" height="26" viewBox="0 0 24 26"><path d="M2 7C2 2 9 1 13 3C18 5 22 4 22 9C22 14 16 14 12 13C6 12 2 12 2 7Z" fill="#d9d9d9" stroke="#c6c6c6" stroke-width="1"/><ellipse cx="9" cy="7" rx="4" ry="2" fill="none" stroke="#c6c6c6"/></svg>
<svg class="a" style="left:339px;top:73px" width="24" height="26" viewBox="0 0 24 26"><path d="M2 7C2 2 9 1 13 3C18 5 22 4 22 9C22 14 16 14 12 13C6 12 2 12 2 7Z" fill="#d9d9d9" stroke="#c6c6c6" stroke-width="1"/><ellipse cx="9" cy="7" rx="4" ry="2" fill="none" stroke="#c6c6c6"/></svg>
<svg class="a" style="left:369px;top:73px" width="24" height="25" viewBox="0 0 24 25"><path d="M4 3l7 9l8-6M11 12v8" fill="none" stroke="#d0d0d0" stroke-width="1.3"/><circle cx="4" cy="3" r="2" fill="#eee" stroke="#ccc"/><circle cx="19" cy="6" r="2" fill="#eee" stroke="#ccc"/><rect x="12" y="14" width="10" height="10" rx="1.5" fill="#d6d6d6"/></svg>
<svg class="a" style="left:400px;top:73px" width="24" height="25" viewBox="0 0 24 25"><path d="M12 1v23M2 14h20" stroke="#d0d0d0" stroke-width="1.2"/><rect x="15" y="3" width="6" height="6" fill="#eee" stroke="#ccc"/><rect x="3" y="17" width="6" height="6" fill="#eee" stroke="#ccc"/><circle cx="12" cy="14" r="2" fill="#ddd"/></svg>
<svg class="a" style="left:431px;top:73px" width="24" height="25" viewBox="0 0 24 25"><path d="M3 8C3 2 10 2 12 5C14 2 21 2 21 8C21 12 16 14 12 16C8 14 3 12 3 8Z" fill="#dcdcdc" stroke="#ccc"/><circle cx="9" cy="20" r="2.5" fill="none" stroke="#ccc" stroke-width="1.4"/><circle cx="15" cy="20" r="2.5" fill="none" stroke="#ccc" stroke-width="1.4"/><path d="M9 17L14 9M15 17L10 9" stroke="#ccc"/></svg>
<svg class="a" style="left:462px;top:73px" width="24" height="25" viewBox="0 0 24 25"><path d="M3 8C3 2 10 2 12 5C14 2 21 2 21 8C21 12 16 14 12 16C8 14 3 12 3 8Z" fill="#dcdcdc" stroke="#ccc"/><circle cx="9" cy="20" r="2.5" fill="none" stroke="#ccc" stroke-width="1.4"/><circle cx="15" cy="20" r="2.5" fill="none" stroke="#ccc" stroke-width="1.4"/><path d="M9 17L14 9M15 17L10 9" stroke="#ccc"/></svg>
<svg class="a" style="left:494px;top:73px" width="24" height="25" viewBox="0 0 24 25"><path d="M3 8C3 2 10 2 12 5C14 2 21 2 21 8C21 12 16 14 12 16C8 14 3 12 3 8Z" fill="#dcdcdc" stroke="#ccc"/><circle cx="9" cy="20" r="2.5" fill="none" stroke="#ccc" stroke-width="1.4"/><circle cx="15" cy="20" r="2.5" fill="none" stroke="#ccc" stroke-width="1.4"/><path d="M9 17L14 9M15 17L10 9" stroke="#ccc"/></svg>
<svg class="a" style="left:524px;top:73px" width="13" height="25" viewBox="0 0 13 25"><path d="M2 4h10M2 9h10M2 14h10M2 19h10" stroke="#d8d8d8" stroke-width="1.2"/></svg>
<div class="a" style="left:2px;top:106px;width:2px;height:26px;background-image:linear-gradient(#a8a8a8 50%,transparent 50%);background-size:2px 4px"></div>
<svg class="a" style="left:13px;top:107px" width="24" height="24" viewBox="0 0 24 24"><rect x="1" y="2" width="21" height="20" fill="#c8e8b8"/><path d="M2 6c4 2 6-1 9 2s4 6 10 4M5 20c2-5 6-3 8-8" stroke="#90c8e0" stroke-width="2" fill="none"/><path d="M14 18l3 3l6-7" fill="none" stroke="#3a9a3a" stroke-width="2"/></svg>
<svg class="a" style="left:45px;top:107px" width="24" height="24" viewBox="0 0 24 24"><rect x="1" y="4" width="20" height="18" fill="#f2e0a0"/><path d="M1 14l8-4l5 6l7-3v9H1z" fill="#78b8e8"/><rect x="2" y="4" width="6" height="6" fill="#4aaa5a"/><path d="M9 18L21 2" stroke="#8a3a20" stroke-width="3"/><path d="M8 20l2-3" stroke="#222" stroke-width="2"/></svg>
<div class="a" style="left:73px;top:103px;width:1px;height:32px;background:#d0d0d0"></div><div class="a" style="left:74px;top:103px;width:1px;height:32px;background:#fafafa"></div>
<div class="a" style="left:79px;top:106px;width:2px;height:26px;background-image:linear-gradient(#a8a8a8 50%,transparent 50%);background-size:2px 4px"></div>
<svg class="a" style="left:94px;top:108px" width="14" height="20" viewBox="0 0 14 20"><path d="M7 1v8M4 4l3-3l3 3" fill="none" stroke="#111" stroke-width="1.6"/><rect x="1" y="10" width="12" height="9" fill="#111"/><rect x="4" y="9" width="6" height="2" fill="#111"/><circle cx="7" cy="14.5" r="2.6" fill="none" stroke="#fff" stroke-width="1.2"/></svg>
<svg class="a" style="left:120px;top:107px" width="24" height="25" viewBox="0 0 24 25"><rect x="1.5" y="1.5" width="18" height="16" fill="#fff" stroke="#111" stroke-width="2.2" stroke-dasharray="3 1.5"/><path d="M4 15l5-6l4 4l3-3l3 5z" fill="#333"/><path d="M14 11l0 12l3-3l2.5 4l2-1l-2.5-4h4z" fill="#fff" stroke="#111" stroke-width="1"/></svg>
</div><!--/TB-->
<!--LP--><div id="layerpanel" class="a">
<div class="a" style="left:0;top:0;width:354px;height:30px;background:#d9d9d9;border:1px solid #c6c6c6"></div>
<div class="a" style="left:6px;top:9px;font-size:14.5px">Layer</div>
<svg class="a" style="left:307px;top:6px" width="18" height="18" viewBox="0 0 18 18"><rect x="5.5" y="1.5" width="10" height="8.5" fill="none" stroke="#333" stroke-width="2"/><rect x="1.5" y="7.5" width="10.5" height="9" fill="#d9d9d9" stroke="#333" stroke-width="2"/><path d="M2 9.2h10" stroke="#333" stroke-width="1.2"/></svg>
<svg class="a" style="left:332px;top:7px" width="17" height="17" viewBox="0 0 17 17"><path d="M1.5 1.5L15.5 15.5M15.5 1.5L1.5 15.5" stroke="#333" stroke-width="2.8"/></svg>
<svg class="a" style="left:5px;top:37px" width="18" height="18" viewBox="0 0 18 18"><path d="M9 9L16 2" stroke="#e8a020" stroke-width="3"/><path d="M2 10c2-3 5-3 7-1c1 2 0 5-3 6c-2 1-4 0-5-1z" fill="#d04040"/><path d="M2 10l4 5" stroke="#5a80c0" stroke-width="2.5"/><path d="M4 9l5 4" stroke="#e8c040" stroke-width="2"/></svg>
<svg class="a" style="left:28px;top:37px" width="18" height="18" viewBox="0 0 18 18"><path d="M1 17V9M1 17H7" fill="none" stroke="#aaa"/><rect x="3.5" y="5.5" width="9" height="9" fill="#fff" stroke="#888"/><path d="M7 7.5v4a1.5 1.5 0 0 0 3 0V1.5" fill="none" stroke="#888" stroke-width="1.1"/><circle cx="13" cy="14" r="3.5" fill="#5a9a5a"/><path d="M13 12v4M11 14h4" stroke="#fff" stroke-width="1.2"/></svg>
<svg class="a" style="left:51px;top:37px" width="22" height="18" viewBox="0 0 22 18"><path d="M1 8c4-6 12-6 16 0c-4 6-12 6-16 0z" fill="#c8d8e8" stroke="#777"/><circle cx="9" cy="8" r="3.2" fill="#335577"/><path d="M12 12h9l-4.5 5z" fill="#111"/></svg>
<svg class="a" style="left:74px;top:36px" width="18" height="20" viewBox="0 0 18 20"><path d="M1 2h16l-6 8v8l-4 1v-9z" fill="#5b88c0" stroke="#3d6598"/><rect x="1" y="1" width="16" height="3" fill="#e8d050"/></svg>
<svg class="a" style="left:97px;top:37px" width="20" height="20" viewBox="0 0 20 20"><text x="1" y="12" font-family="Liberation Serif" font-size="14" fill="#ccc">ε</text><rect x="9" y="11" width="8" height="7" fill="#e0e0e0"/></svg>
<svg class="a" style="left:119px;top:43px" width="10" height="6" viewBox="0 0 10 6"><path d="M0 0h10L5 6z" fill="#777"/></svg>
<svg class="a" style="left:134px;top:36px" width="20" height="20" viewBox="0 0 20 20"><rect x="1" y="2" width="9" height="16" fill="none" stroke="#e8c040"/><rect x="3" y="5" width="3" height="3" fill="#e8a020"/><rect x="3" y="12" width="3" height="3" fill="#e8a020"/><path d="M12 1v12M8 10l4 6l4-6z" stroke="#4a80c0" stroke-width="3" fill="#4a80c0"/></svg>
<svg class="a" style="left:157px;top:36px" width="20" height="20" viewBox="0 0 20 20"><rect x="1" y="2" width="9" height="16" fill="none" stroke="#e8c040"/><rect x="3" y="5" width="3" height="3" fill="#e8a020"/><rect x="3" y="12" width="3" height="3" fill="#e8a020"/><path d="M12 19V7M8 9l4-7l4 7z" stroke="#4a80c0" stroke-width="3" fill="#4a80c0"/></svg>
<svg class="a" style="left:181px;top:37px" width="18" height="18" viewBox="0 0 18 18"><rect x="1.5" y="1.5" width="12" height="12" fill="#fff" stroke="#999"/><rect x="10" y="11" width="7" height="5" rx="2" fill="#d03030"/><path d="M11.5 13.5h4" stroke="#fff"/></svg>
<div class="a" style="left:0;top:59px;width:354px;height:736px;background:#fff;border:1px solid #8c8c8c"></div>
<div class="a" style="left:348px;top:84px;width:4px;height:405px;background:#e6e6e6"></div>
<div class="a" style="left:1px;top:774px;width:352px;height:19px;background:#f0f0f0"></div>
<div class="a" style="left:22px;top:774px;width:216px;height:19px;background:#cdcdcd"></div>
<svg class="a" style="left:8px;top:779px" width="8" height="10" viewBox="0 0 8 10"><path d="M6 1L2 5L6 9" fill="none" stroke="#333" stroke-width="1.6"/></svg>
<svg class="a" style="left:338px;top:779px" width="8" height="10" viewBox="0 0 8 10"><path d="M2 1L6 5L2 9" fill="none" stroke="#333" stroke-width="1.6"/></svg>
<div class="a" style="left:26px;top:60px;width:327px;height:24px;background:#cce8ff"></div>
<div class="a" style="left:51px;top:60px;width:302px;height:24px;border:1px dotted #222"></div>
<svg class="a" style="left:7px;top:69px" width="12" height="8" viewBox="0 0 12 8"><path d="M1 1.5L6 6.5L11 1.5" fill="none" stroke="#333" stroke-width="1.7"/></svg>
<div class="a" style="left:29px;top:64px;width:16px;height:16px;border:1px solid #333;background:#fff"></div><svg class="a" style="left:29px;top:64px" width="16" height="16" viewBox="0 0 16 16"><path d="M3.2 8.2L6.5 11.5L12.8 4.5" fill="none" stroke="#333" stroke-width="1.5"/></svg>
<svg class="a" style="left:51px;top:63px" width="18" height="20" viewBox="0 0 18 20"><path d="M1 19V12M1 19H8" fill="none" stroke="#c4c4c4" stroke-width="1.2"/><path d="M3.5 16.5V9h2M3.5 16.5H11" fill="none" stroke="#7f9fb8" stroke-width="1.2"/><rect x="6" y="5.5" width="11" height="11" fill="#cce8ff" stroke="#7f9fb8" stroke-width="1.3"/><path d="M9.5 7.5v5.5a2 2 0 0 0 4 0V1" fill="none" stroke="#7f9fb8" stroke-width="1.4"/><path d="M11.5 1v11" stroke="#7f9fb8" stroke-width="1"/></svg>
<div class="tree " style="left:77px;top:65px;max-width:271px;overflow:hidden">Gebiet_und_Wege</div>
<svg class="a" style="left:35px;top:90px" width="8" height="12" viewBox="0 0 8 12"><path d="M1.5 1L6.5 6L1.5 11" fill="none" stroke="#9a9a9a" stroke-width="1.7"/></svg>
<div class="a" style="left:54px;top:88px;width:16px;height:16px;border:1px solid #333;background:#fff"></div><svg class="a" style="left:54px;top:88px" width="16" height="16" viewBox="0 0 16 16"><path d="M3.2 8.2L6.5 11.5L12.8 4.5" fill="none" stroke="#333" stroke-width="1.5"/></svg>
<svg class="a" style="left:76px;top:87px" width="18" height="20" viewBox="0 0 18 20"><path d="M1 19V12M1 19H8" fill="none" stroke="#c4c4c4" stroke-width="1.2"/><path d="M3.5 16.5V9h2M3.5 16.5H11" fill="none" stroke="#9a9a9a" stroke-width="1.2"/><rect x="6" y="5.5" width="11" height="11" fill="#fff" stroke="#9a9a9a" stroke-width="1.3"/><path d="M9.5 7.5v5.5a2 2 0 0 0 4 0V1" fill="none" stroke="#9a9a9a" stroke-width="1.4"/><path d="M11.5 1v11" stroke="#9a9a9a" stroke-width="1"/></svg>
<div class="tree " style="left:102px;top:89px;max-width:246px;overflow:hidden">Strasse</div>
<svg class="a" style="left:35px;top:114px" width="8" height="12" viewBox="0 0 8 12"><path d="M1.5 1L6.5 6L1.5 11" fill="none" stroke="#9a9a9a" stroke-width="1.7"/></svg>
<div class="a" style="left:54px;top:112px;width:16px;height:16px;border:1px solid #333;background:#fff"></div><svg class="a" style="left:54px;top:112px" width="16" height="16" viewBox="0 0 16 16"><path d="M3.2 8.2L6.5 11.5L12.8 4.5" fill="none" stroke="#333" stroke-width="1.5"/></svg>
<svg class="a" style="left:76px;top:111px" width="18" height="20" viewBox="0 0 18 20"><path d="M1 19V12M1 19H8" fill="none" stroke="#c4c4c4" stroke-width="1.2"/><path d="M3.5 16.5V9h2M3.5 16.5H11" fill="none" stroke="#9a9a9a" stroke-width="1.2"/><rect x="6" y="5.5" width="11" height="11" fill="#fff" stroke="#9a9a9a" stroke-width="1.3"/><path d="M9.5 7.5v5.5a2 2 0 0 0 4 0V1" fill="none" stroke="#9a9a9a" stroke-width="1.4"/><path d="M11.5 1v11" stroke="#9a9a9a" stroke-width="1"/></svg>
<div class="tree " style="left:102px;top:113px;max-width:246px;overflow:hidden">Rundweg</div>
<svg class="a" style="left:35px;top:138px" width="8" height="12" viewBox="0 0 8 12"><path d="M1.5 1L6.5 6L1.5 11" fill="none" stroke="#9a9a9a" stroke-width="1.7"/></svg>
<div class="a" style="left:54px;top:136px;width:16px;height:16px;border:1px solid #333;background:#fff"></div><svg class="a" style="left:54px;top:136px" width="16" height="16" viewBox="0 0 16 16"><path d="M3.2 8.2L6.5 11.5L12.8 4.5" fill="none" stroke="#333" stroke-width="1.5"/></svg>
<svg class="a" style="left:76px;top:135px" width="18" height="20" viewBox="0 0 18 20"><path d="M1 19V12M1 19H8" fill="none" stroke="#c4c4c4" stroke-width="1.2"/><path d="M3.5 16.5V9h2M3.5 16.5H11" fill="none" stroke="#9a9a9a" stroke-width="1.2"/><rect x="6" y="5.5" width="11" height="11" fill="#fff" stroke="#9a9a9a" stroke-width="1.3"/><path d="M9.5 7.5v5.5a2 2 0 0 0 4 0V1" fill="none" stroke="#9a9a9a" stroke-width="1.4"/><path d="M11.5 1v11" stroke="#9a9a9a" stroke-width="1"/></svg>
<div class="tree " style="left:102px;top:137px;max-width:246px;overflow:hidden">NSG_1983</div>
<svg class="a" style="left:32px;top:165px" width="12" height="8" viewBox="0 0 12 8"><path d="M1 1.5L6 6.5L11 1.5" fill="none" stroke="#333" stroke-width="1.7"/></svg>
<div class="a" style="left:54px;top:160px;width:16px;height:16px;border:1px solid #333;background:#fff"></div><svg class="a" style="left:54px;top:160px" width="16" height="16" viewBox="0 0 16 16"><path d="M3.2 8.2L6.5 11.5L12.8 4.5" fill="none" stroke="#333" stroke-width="1.5"/></svg>
<svg class="a" style="left:76px;top:159px" width="18" height="20" viewBox="0 0 18 20"><path d="M1 19V12M1 19H8" fill="none" stroke="#c4c4c4" stroke-width="1.2"/><path d="M3.5 16.5V9h2M3.5 16.5H11" fill="none" stroke="#9a9a9a" stroke-width="1.2"/><rect x="6" y="5.5" width="11" height="11" fill="#fff" stroke="#9a9a9a" stroke-width="1.3"/><path d="M9.5 7.5v5.5a2 2 0 0 0 4 0V1" fill="none" stroke="#9a9a9a" stroke-width="1.4"/><path d="M11.5 1v11" stroke="#9a9a9a" stroke-width="1"/></svg>
<div class="tree " style="left:102px;top:161px;max-width:246px;overflow:hidden">NSG_1937 = Alter Bannwald</div>
<div class="a" style="left:79px;top:184px;width:16px;height:16px;border:1px solid #333;background:#fff"></div><svg class="a" style="left:79px;top:184px" width="16" height="16" viewBox="0 0 16 16"><path d="M3.2 8.2L6.5 11.5L12.8 4.5" fill="none" stroke="#333" stroke-width="1.5"/></svg>
<svg class="a" style="left:102px;top:183px" width="18" height="18" viewBox="0 0 18 18"><rect x="1" y="1" width="16" height="16" fill="#fff" stroke="#2233aa" stroke-width="2"/><path d="M6.5 2v14M11.5 2v14" stroke="#c02020" stroke-width="1"/></svg>
<div class="tree b" style="left:127px;top:185px;max-width:221px;overflow:hidden">nsg_1937_flaeche</div>
<div class="a" style="left:79px;top:208px;width:16px;height:16px;border:1px solid #333;background:#fff"></div><svg class="a" style="left:79px;top:208px" width="16" height="16" viewBox="0 0 16 16"><path d="M3.2 8.2L6.5 11.5L12.8 4.5" fill="none" stroke="#333" stroke-width="1.5"/></svg>
<div class="a" style="left:102px;top:214px;width:18px;height:4px;background:#1e7a2a"></div>
<div class="tree b" style="left:127px;top:209px;max-width:221px;overflow:hidden">nsg_1937_umriss</div>
<div class="a" style="left:29px;top:232px;width:16px;height:16px;border:1px solid #333;background:#fff"></div><svg class="a" style="left:29px;top:232px" width="16" height="16" viewBox="0 0 16 16"><path d="M3.2 8.2L6.5 11.5L12.8 4.5" fill="none" stroke="#333" stroke-width="1.5"/></svg>
<svg class="a" style="left:53px;top:233px" width="16" height="16" viewBox="0 0 16 16"><rect x="0" y="0" width="4" height="4" fill="#fff"/><rect x="4" y="0" width="4" height="4" fill="#1c3b5e"/><rect x="8" y="0" width="4" height="4" fill="#1c3b5e"/><rect x="12" y="0" width="4" height="4" fill="#fff"/><rect x="0" y="4" width="4" height="4" fill="#b8cfe8"/><rect x="4" y="4" width="4" height="4" fill="#1c3b5e"/><rect x="8" y="4" width="4" height="4" fill="#b8cfe8"/><rect x="12" y="4" width="4" height="4" fill="#1c3b5e"/><rect x="0" y="8" width="4" height="4" fill="#1c3b5e"/><rect x="4" y="8" width="4" height="4" fill="#b8cfe8"/><rect x="8" y="8" width="4" height="4" fill="#1c3b5e"/><rect x="12" y="8" width="4" height="4" fill="#b8cfe8"/><rect x="0" y="12" width="4" height="4" fill="#dfe8f2"/><rect x="4" y="12" width="4" height="4" fill="#1c3b5e"/><rect x="8" y="12" width="4" height="4" fill="#b8cfe8"/><rect x="12" y="12" width="4" height="4" fill="#fff"/></svg>
<div class="tree b" style="left:77px;top:233px;max-width:271px;overflow:hidden">WT_DGM1_rast</div>
<div class="a" style="left:29px;top:256px;width:16px;height:16px;border:1px solid #333;background:#fff"></div>
<div class="a" style="left:56px;top:259px;width:10px;height:10px;border-radius:50%;background:#f0a030;border:1px solid #a06010"></div>
<div class="tree gi" style="left:77px;top:257px;max-width:271px;overflow:hidden">WT_DGM1_gpkg</div>
<div class="a" style="left:29px;top:280px;width:16px;height:16px;border:1px solid #333;background:#fff"></div>
<div class="a" style="left:56px;top:283px;width:10px;height:10px;border-radius:50%;background:#b84040;border:1px solid #802020"></div>
<div class="tree gi" style="left:77px;top:281px;max-width:271px;overflow:hidden">WT_DGM1_xyz</div>
<div class="a" style="left:29px;top:304px;width:16px;height:16px;border:1px solid #333;background:#fff"></div>
<div class="a" style="left:53px;top:304px;width:16px;height:16px;border-radius:50%;background:#fff;border:1.5px solid #222"><div class="a" style="left:4.5px;top:4.5px;width:5px;height:5px;border-radius:50%;background:#111"></div></div>
<div class="tree gi" style="left:77px;top:305px;max-width:271px;overflow:hidden">Funde_WT_2017_2019</div>
<svg class="a" style="left:10px;top:330px" width="8" height="12" viewBox="0 0 8 12"><path d="M1.5 1L6.5 6L1.5 11" fill="none" stroke="#9a9a9a" stroke-width="1.7"/></svg>
<div class="a" style="left:29px;top:328px;width:16px;height:16px;border:1px solid #333;background:#fff"></div>
<svg class="a" style="left:51px;top:327px" width="18" height="20" viewBox="0 0 18 20"><path d="M1 19V12M1 19H8" fill="none" stroke="#c4c4c4" stroke-width="1.2"/><path d="M3.5 16.5V9h2M3.5 16.5H11" fill="none" stroke="#9a9a9a" stroke-width="1.2"/><rect x="6" y="5.5" width="11" height="11" fill="#fff" stroke="#9a9a9a" stroke-width="1.3"/><path d="M9.5 7.5v5.5a2 2 0 0 0 4 0V1" fill="none" stroke="#9a9a9a" stroke-width="1.4"/><path d="M11.5 1v11" stroke="#9a9a9a" stroke-width="1"/></svg>
<div class="tree " style="left:77px;top:329px;max-width:271px;overflow:hidden">Pflanzengesellschaften</div>
<svg class="a" style="left:10px;top:354px" width="8" height="12" viewBox="0 0 8 12"><path d="M1.5 1L6.5 6L1.5 11" fill="none" stroke="#9a9a9a" stroke-width="1.7"/></svg>
<div class="a" style="left:29px;top:352px;width:16px;height:16px;border:1px solid #333;background:#fff"></div>
<svg class="a" style="left:51px;top:351px" width="18" height="20" viewBox="0 0 18 20"><path d="M1 19V12M1 19H8" fill="none" stroke="#c4c4c4" stroke-width="1.2"/><path d="M3.5 16.5V9h2M3.5 16.5H11" fill="none" stroke="#9a9a9a" stroke-width="1.2"/><rect x="6" y="5.5" width="11" height="11" fill="#fff" stroke="#9a9a9a" stroke-width="1.3"/><path d="M9.5 7.5v5.5a2 2 0 0 0 4 0V1" fill="none" stroke="#9a9a9a" stroke-width="1.4"/><path d="M11.5 1v11" stroke="#9a9a9a" stroke-width="1"/></svg>
<div class="tree " style="left:77px;top:353px;max-width:271px;overflow:hidden">Biotope</div>
<svg class="a" style="left:10px;top:378px" width="8" height="12" viewBox="0 0 8 12"><path d="M1.5 1L6.5 6L1.5 11" fill="none" stroke="#9a9a9a" stroke-width="1.7"/></svg>
<div class="a" style="left:29px;top:376px;width:16px;height:16px;border:1px solid #333;background:#fff"></div>
<svg class="a" style="left:50px;top:375px" width="22" height="18" viewBox="0 0 22 18"><path d="M2 5C5 1 9 5 12 3C16 1 21 2 20 9C20 14 16 14 12 12C8 11 5 15 3 12C1 9 1 7 2 5Z" fill="#e0e0e0" stroke="#999" stroke-width="1"/></svg>
<div class="tree gi" style="left:77px;top:377px;max-width:271px;overflow:hidden">Bodenarten</div>
<svg class="a" style="left:10px;top:402px" width="8" height="12" viewBox="0 0 8 12"><path d="M1.5 1L6.5 6L1.5 11" fill="none" stroke="#9a9a9a" stroke-width="1.7"/></svg>
<div class="a" style="left:29px;top:400px;width:16px;height:16px;border:1px solid #333;background:#fff"></div>
<svg class="a" style="left:51px;top:399px" width="18" height="20" viewBox="0 0 18 20"><path d="M1 19V12M1 19H8" fill="none" stroke="#c4c4c4" stroke-width="1.2"/><path d="M3.5 16.5V9h2M3.5 16.5H11" fill="none" stroke="#9a9a9a" stroke-width="1.2"/><rect x="6" y="5.5" width="11" height="11" fill="#fff" stroke="#9a9a9a" stroke-width="1.3"/><path d="M9.5 7.5v5.5a2 2 0 0 0 4 0V1" fill="none" stroke="#9a9a9a" stroke-width="1.4"/><path d="M11.5 1v11" stroke="#9a9a9a" stroke-width="1"/></svg>
<div class="tree " style="left:77px;top:401px;max-width:271px;overflow:hidden">Baumfreie_offene_Moorbereiche</div>
<svg class="a" style="left:7px;top:429px" width="12" height="8" viewBox="0 0 12 8"><path d="M1 1.5L6 6.5L11 1.5" fill="none" stroke="#333" stroke-width="1.7"/></svg>
<div class="a" style="left:29px;top:424px;width:16px;height:16px;border:1px solid #333;background:#fff"></div>
<svg class="a" style="left:53px;top:425px" width="16" height="16" viewBox="0 0 16 16"><rect x="0" y="0" width="4" height="4" fill="#fff"/><rect x="4" y="0" width="4" height="4" fill="#1c3b5e"/><rect x="8" y="0" width="4" height="4" fill="#1c3b5e"/><rect x="12" y="0" width="4" height="4" fill="#fff"/><rect x="0" y="4" width="4" height="4" fill="#b8cfe8"/><rect x="4" y="4" width="4" height="4" fill="#1c3b5e"/><rect x="8" y="4" width="4" height="4" fill="#b8cfe8"/><rect x="12" y="4" width="4" height="4" fill="#1c3b5e"/><rect x="0" y="8" width="4" height="4" fill="#1c3b5e"/><rect x="4" y="8" width="4" height="4" fill="#b8cfe8"/><rect x="8" y="8" width="4" height="4" fill="#1c3b5e"/><rect x="12" y="8" width="4" height="4" fill="#b8cfe8"/><rect x="0" y="12" width="4" height="4" fill="#dfe8f2"/><rect x="4" y="12" width="4" height="4" fill="#1c3b5e"/><rect x="8" y="12" width="4" height="4" fill="#b8cfe8"/><rect x="12" y="12" width="4" height="4" fill="#fff"/></svg>
<div class="tree gi" style="left:77px;top:425px;max-width:271px;overflow:hidden">OpenStreetMap Standard</div>
<svg class="a" style="left:10px;top:450px" width="8" height="12" viewBox="0 0 8 12"><path d="M1.5 1L6.5 6L1.5 11" fill="none" stroke="#9a9a9a" stroke-width="1.7"/></svg>
<div class="a" style="left:29px;top:448px;width:16px;height:16px;border:1px solid #333;background:#fff"></div>
<svg class="a" style="left:53px;top:449px" width="16" height="16" viewBox="0 0 16 16"><rect x="0" y="0" width="4" height="4" fill="#fff"/><rect x="4" y="0" width="4" height="4" fill="#1c3b5e"/><rect x="8" y="0" width="4" height="4" fill="#1c3b5e"/><rect x="12" y="0" width="4" height="4" fill="#fff"/><rect x="0" y="4" width="4" height="4" fill="#b8cfe8"/><rect x="4" y="4" width="4" height="4" fill="#1c3b5e"/><rect x="8" y="4" width="4" height="4" fill="#b8cfe8"/><rect x="12" y="4" width="4" height="4" fill="#1c3b5e"/><rect x="0" y="8" width="4" height="4" fill="#1c3b5e"/><rect x="4" y="8" width="4" height="4" fill="#b8cfe8"/><rect x="8" y="8" width="4" height="4" fill="#1c3b5e"/><rect x="12" y="8" width="4" height="4" fill="#b8cfe8"/><rect x="0" y="12" width="4" height="4" fill="#dfe8f2"/><rect x="4" y="12" width="4" height="4" fill="#1c3b5e"/><rect x="8" y="12" width="4" height="4" fill="#b8cfe8"/><rect x="12" y="12" width="4" height="4" fill="#fff"/></svg>
<div class="tree gi" style="left:77px;top:449px;max-width:271px;overflow:hidden">WMS LGRB-BW BK50: Bodenkarte 1 : 50000</div>
<svg class="a" style="left:10px;top:474px" width="8" height="12" viewBox="0 0 8 12"><path d="M1.5 1L6.5 6L1.5 11" fill="none" stroke="#9a9a9a" stroke-width="1.7"/></svg>
<div class="a" style="left:29px;top:472px;width:16px;height:16px;border:1px solid #333;background:#fff"></div>
<svg class="a" style="left:53px;top:473px" width="16" height="16" viewBox="0 0 16 16"><rect x="0" y="0" width="4" height="4" fill="#fff"/><rect x="4" y="0" width="4" height="4" fill="#1c3b5e"/><rect x="8" y="0" width="4" height="4" fill="#1c3b5e"/><rect x="12" y="0" width="4" height="4" fill="#fff"/><rect x="0" y="4" width="4" height="4" fill="#b8cfe8"/><rect x="4" y="4" width="4" height="4" fill="#1c3b5e"/><rect x="8" y="4" width="4" height="4" fill="#b8cfe8"/><rect x="12" y="4" width="4" height="4" fill="#1c3b5e"/><rect x="0" y="8" width="4" height="4" fill="#1c3b5e"/><rect x="4" y="8" width="4" height="4" fill="#b8cfe8"/><rect x="8" y="8" width="4" height="4" fill="#1c3b5e"/><rect x="12" y="8" width="4" height="4" fill="#b8cfe8"/><rect x="0" y="12" width="4" height="4" fill="#dfe8f2"/><rect x="4" y="12" width="4" height="4" fill="#1c3b5e"/><rect x="8" y="12" width="4" height="4" fill="#b8cfe8"/><rect x="12" y="12" width="4" height="4" fill="#fff"/></svg>
<div class="tree gi" style="left:77px;top:473px;max-width:271px;overflow:hidden">WMS LGRB-BW GK50: Geologische Karte 1 : 50000</div>
</div><!--/LP-->
<div id="map" class="a"><svg width="1310" height="797" viewBox="408 199 1310 797" style="position:absolute;left:0;top:0">
<defs>
<filter id="hs" x="408" y="198" width="1310" height="797" filterUnits="userSpaceOnUse" primitiveUnits="userSpaceOnUse" color-interpolation-filters="sRGB">
<feTurbulence type="fractalNoise" baseFrequency="0.15 0.13" numOctaves="2" seed="11" result="n"/>
<feDiffuseLighting in="n" surfaceScale="1.1" diffuseConstant="1.0" lighting-color="#ffffff" result="l">
<feDistantLight azimuth="225" elevation="55"/>
</feDiffuseLighting>
<feColorMatrix type="matrix" values="0.33 0.33 0.33 0 0  0.33 0.33 0.33 0 0  0.33 0.33 0.33 0 0  0 0 0 0 1"/>
<feComponentTransfer><feFuncR type="linear" slope="1.0" intercept="-0.04"/><feFuncG type="linear" slope="1.0" intercept="-0.04"/><feFuncB type="linear" slope="1.0" intercept="-0.04"/></feComponentTransfer>
</filter>
<filter id="soft" x="-5%" y="-5%" width="110%" height="110%"><feGaussianBlur stdDeviation="1"/></filter><clipPath id="hsclip"><polygon points="932,223 1402,400 1589,908 1300,935 1050,964 609,969 465,772 496,455"/></clipPath>
<linearGradient id="hg" x1="0" y1="0" x2="0" y2="1" gradientUnits="objectBoundingBox">
<stop offset="0" stop-color="#000" stop-opacity="0.06"/>
<stop offset="0.5" stop-color="#000" stop-opacity="0.0"/>
<stop offset="0.78" stop-color="#fff" stop-opacity="0.03"/>
<stop offset="1" stop-color="#fff" stop-opacity="0.2"/>
</linearGradient>
<linearGradient id="topband" gradientUnits="userSpaceOnUse" x1="1170" y1="312" x2="1153" y2="357">
<stop offset="0" stop-color="#000" stop-opacity="0.2"/>
<stop offset="1" stop-color="#000" stop-opacity="0"/>
</linearGradient>
<pattern id="hatch" patternUnits="userSpaceOnUse" x="4" y="0" width="8" height="100"><rect x="0" y="0" width="1" height="100" fill="#b8281a"/></pattern>
<pattern id="grid" patternUnits="userSpaceOnUse" x="0" y="0" width="5.2" height="5.2"><path d="M0 0.5H5.2M0.5 0V5.2" stroke="#000" stroke-opacity="0.05" stroke-width="1"/></pattern>
</defs>
<g clip-path="url(#hsclip)">
<rect x="408" y="198" width="1310" height="797" fill="#c4c4c4"/>
<rect x="408" y="198" width="1310" height="797" fill="#fff" filter="url(#hs)"/>
<rect x="460" y="220" width="1135" height="755" fill="url(#hg)"/><rect x="460" y="220" width="1135" height="755" fill="url(#grid)"/>
<polygon points="932,223 1402,400 1385,445 915,268" fill="url(#topband)"/>
<polygon points="932,223 496,455 520,470 940,250" fill="#000" fill-opacity="0.06"/>
<polygon points="1366,405 1402,400 1589,908 1486,759 1300,565 1322,520" fill="#fff" fill-opacity="0.12"/><polygon points="1155,337 1326,399 1366,405 1322,520 1300,565 1220,493 1147,369" fill="#fff" fill-opacity="0.1"/>
<polygon points="465,772 496,455 536,467 551,627 469,773 607,944 609,969" fill="#000" fill-opacity="0.07"/><polygon points="600,832 900,826 1100,800 1300,785 1486,759 1058,942 836,948 607,944" fill="#fff" fill-opacity="0.05"/>
<g fill="none" stroke-linecap="round" filter="url(#soft)">
<path d="M482,617 C505,614 530,620 548,627" stroke="#fff" stroke-opacity="0.7" stroke-width="2.5"/>
<path d="M482,621 C505,618 530,624 548,631" stroke="#444" stroke-opacity="0.55" stroke-width="1.5"/>
<path d="M588,828 C605,818 620,808 645,802" stroke="#fff" stroke-opacity="0.9" stroke-width="4"/><path d="M655,838 C720,835 800,832 870,826 C950,820 1050,812 1150,800" stroke="#fff" stroke-opacity="0.35" stroke-width="5"/>
<path d="M588,822 C605,812 620,802 645,796" stroke="#222" stroke-opacity="0.7" stroke-width="2"/>
<path d="M718,818 C735,780 752,745 771,715 C800,680 840,650 880,622" stroke="#333" stroke-opacity="0.5" stroke-width="1.6"/>
<path d="M721,820 C738,782 755,747 774,717 C803,682 843,652 883,624" stroke="#fff" stroke-opacity="0.6" stroke-width="1.6"/>
<path d="M786,734 C810,710 840,685 864,663" stroke="#333" stroke-opacity="0.45" stroke-width="1.4"/>
<path d="M1225,548 C1255,505 1285,455 1317,413" stroke="#333" stroke-opacity="0.55" stroke-width="1.8"/>
<path d="M1228,550 C1258,507 1288,457 1320,415" stroke="#fff" stroke-opacity="0.6" stroke-width="1.6"/>
<path d="M1405,926 C1440,915 1480,902 1545,898" stroke="#111" stroke-opacity="0.7" stroke-width="2"/><path d="M1505,888 L1530,878 L1540,872 L1542,892 L1510,898 Z" fill="#fff" fill-opacity="0.7" stroke="#111" stroke-opacity="0.7" stroke-width="2"/>
<path d="M1090,958 C1200,942 1350,922 1500,908" stroke="#fff" stroke-opacity="0.4" stroke-width="4"/>
<path d="M620,958 C700,950 800,952 900,955" stroke="#fff" stroke-opacity="0.35" stroke-width="4"/>
</g>
</g>
<polygon points="642,801 650,825 861,808 953,787 1102,778 1165,759 1179,595 1152,505 932,591 882,562 684,769" fill="#ffd4d4" fill-opacity="0.26"/>
<polygon points="642,801 650,825 861,808 953,787 1102,778 1165,759 1179,595 1152,505 932,591 882,562 684,769" fill="url(#hatch)"/>
<polygon points="642,801 650,825 861,808 953,787 1102,778 1165,759 1179,595 1152,505 932,591 882,562 684,769" fill="none" stroke="#1a40e0" stroke-width="4.5" stroke-linejoin="round"/>
<polyline points="1004,490 983,524 980,590 875,701 803,743 778,764 790,806 841,803 936,782 1200,680 1355,625" fill="none" stroke="#000" stroke-width="3"/>
<polyline points="987,520 1026,447 1046,423 1060,412 1101,423 1205,470" fill="none" stroke="#000" stroke-width="3"/>
<polygon points="536,467 925,269 1114,345 1125,320 1147,338 1155,337 1326,399 1366,405 1322,520 1310,550 1300,565 1486,759 1058,942 836,945 826,934 806,888 607,944 469,773 551,627" fill="none" stroke="#1238f2" stroke-width="7" stroke-linejoin="round"/>
<polyline points="889,249 1125,345 1147,369 1220,493 1355,625 1490,751 1524,805 1546,845 1548,904" fill="none" stroke="#000" stroke-width="7" stroke-linejoin="round"/>
<text x="0" y="0" font-family="Liberation Sans" font-size="16" transform="translate(867,805) rotate(-15)">nsg_1937</text>
<text x="0" y="0" font-family="Liberation Sans" font-size="16" transform="translate(1130,910) rotate(-27)">nsg_1983</text>
<rect x="762" y="891" width="179" height="44" rx="9" ry="9" fill="#ffff88" stroke="#222" stroke-width="1"/>
<text x="850" y="921" text-anchor="middle" font-family="Liberation Sans" font-weight="bold" font-size="22.5" letter-spacing="0.6">Bild 2</text>
</svg></div>
<!--ST--><div id="status" class="a">
<div class="a" style="left:2px;top:4px;width:279px;height:22px;background:#fff;border:1px solid #7a7a7a;"></div>
<svg class="a" style="left:7px;top:8px" width="16" height="16" viewBox="0 0 16 16"><circle cx="6.5" cy="6.5" r="5" fill="none" stroke="#777" stroke-width="1.4"/><path d="M10 10L14.5 14.5" stroke="#777" stroke-width="1.6"/></svg>
<div class="a" style="left:31px;top:8px;font-size:13.5px;letter-spacing:-0.35px;white-space:nowrap;color:#6d6d6d">Zu suchender Typ (Strg+K)</div>
<div class="a" style="left:722px;top:8px;font-size:13.5px;letter-spacing:-0.35px;white-space:nowrap;">Koordinate</div>
<div class="a" style="left:786px;top:4px;width:110px;height:22px;background:#fff;border:1px solid #7a7a7a;"></div>
<div class="a" style="left:793px;top:8px;font-size:13.5px;letter-spacing:-0.35px;white-space:nowrap;">473630,5398124</div>
<svg class="a" style="left:899px;top:5px" width="22" height="20" viewBox="0 0 22 20"><ellipse cx="9" cy="11" rx="6" ry="8" fill="#fff" stroke="#111" stroke-width="1.8"/><path d="M3 8h12M9 3v5" stroke="#111" stroke-width="1.5"/><circle cx="10" cy="14" r="2.5" fill="none" stroke="#111" stroke-width="1.3"/><path d="M15 4l3-2M17 7l3-1" stroke="#111" stroke-width="1"/></svg>
<div class="a" style="left:933px;top:8px;font-size:13.5px;letter-spacing:-0.35px;white-space:nowrap;">Maßstab</div>
<div class="a" style="left:984px;top:4px;width:91px;height:22px;background:#fff;border:1px solid #7a7a7a;"></div>
<div class="a" style="left:989px;top:8px;font-size:13.5px;letter-spacing:-0.35px;white-space:nowrap;">1:5500</div>
<svg class="a" style="left:1058px;top:12px" width="12" height="8" viewBox="0 0 12 8"><path d="M1 1.5L6 6.5L11 1.5" fill="none" stroke="#333" stroke-width="1.3"/></svg>
<svg class="a" style="left:1085px;top:5px" width="18" height="20" viewBox="0 0 18 20"><path d="M4 9V6a5 5 0 0 1 10 0v3" fill="none" stroke="#6d6d6d" stroke-width="2.2"/><rect x="2" y="9" width="14" height="10" rx="1.5" fill="#6d6d6d"/></svg>
<div class="a" style="left:1111px;top:8px;font-size:13.5px;letter-spacing:-0.35px;white-space:nowrap;">Vergrößerung</div>
<div class="a" style="left:1195px;top:4px;width:85px;height:22px;background:#fff;border:1px solid #7a7a7a;"></div>
<div class="a" style="left:1197px;top:8px;font-size:13.5px;letter-spacing:-0.35px;white-space:nowrap;">100%</div>
<svg class="a" style="left:1263px;top:6px" width="16" height="19" viewBox="0 0 16 19"><rect x="0.5" y="0.5" width="15" height="18" fill="#f2f2f2" stroke="#aaa"/><path d="M4 7l4-4l4 4z M4 12l4 4l4-4z" fill="#222"/></svg>
<div class="a" style="left:1289px;top:8px;font-size:13.5px;letter-spacing:-0.35px;white-space:nowrap;">Drehung</div>
<div class="a" style="left:1346px;top:4px;width:85px;height:22px;background:#fff;border:1px solid #7a7a7a;"></div>
<div class="a" style="left:1349px;top:8px;font-size:13.5px;letter-spacing:-0.35px;white-space:nowrap;">0,0 °</div>
<svg class="a" style="left:1414px;top:6px" width="16" height="19" viewBox="0 0 16 19"><rect x="0.5" y="0.5" width="15" height="18" fill="#f2f2f2" stroke="#aaa"/><path d="M4 7l4-4l4 4z M4 12l4 4l4-4z" fill="#222"/></svg>
<div class="cb on" style="left:1437px;top:7px"></div>
<div class="a" style="left:1459px;top:8px;font-size:13.5px;letter-spacing:-0.35px;white-space:nowrap;">Zeichnen</div>
<svg class="a" style="left:1526px;top:6px" width="20" height="20" viewBox="0 0 20 20"><circle cx="10" cy="10" r="8" fill="none" stroke="#666" stroke-width="1.4"/><ellipse cx="10" cy="10" rx="3.5" ry="8" fill="none" stroke="#666" stroke-width="1.2"/><path d="M2 10h16M3.5 6h13M3.5 14h13" stroke="#666" stroke-width="1.2"/></svg>
<div class="a" style="left:1551px;top:8px;font-size:13.5px;letter-spacing:-0.35px;white-space:nowrap;">EPSG:25832</div>
<svg class="a" style="left:1638px;top:6px" width="22" height="20" viewBox="0 0 22 20"><path d="M11 1C5 1 1 4 1 8.5c0 3 2 5 4 6l-1 4l5-3c1 0 1.5 0 2 0c6 0 10-3 10-7.5S17 1 11 1z" fill="#555"/><circle cx="6.5" cy="8.5" r="1.5" fill="#fff"/><circle cx="11" cy="8.5" r="1.5" fill="#fff"/><circle cx="15.5" cy="8.5" r="1.5" fill="#fff"/></svg>
<svg class="a" style="left:1671px;top:5px" width="24" height="21" viewBox="0 0 24 21"><path d="M2 8h5v-3a2 2 0 0 1 4 0v3h4v5h2a2 2 0 0 1 0 4h-2v3H2v-4a2 2 0 0 0 0-4z" fill="#e8e8e8" stroke="#888" stroke-width="1.2"/><path d="M14 3c3-1 6 0 7 3l-2 1" fill="none" stroke="#888" stroke-width="1.4"/></svg>
<svg class="a" style="left:1703px;top:16px" width="12" height="12" viewBox="0 0 12 12"><g fill="#bbb"><rect x="9" y="1" width="2" height="2"/><rect x="5" y="5" width="2" height="2"/><rect x="9" y="5" width="2" height="2"/><rect x="1" y="9" width="2" height="2"/><rect x="5" y="9" width="2" height="2"/><rect x="9" y="9" width="2" height="2"/></g></svg>
</div><!--/ST-->
<div id="taskbar" class="a"><div class="a" style="left:1229px;top:0;width:61px;height:4px;background:#3e4e5a"></div></div>
<div id="menu" class="a">
  <div class="a" style="left:2px;top:1px;width:207px;height:26px;background:#91c9f7"></div>
  <div class="it" style="top:7px">Rasterrechner...</div>
  <div class="it" style="top:32px">Raster ausrichten...</div>
  <div class="it" style="top:57px">Georeferenzierung...</div>
  <div class="it" style="top:82px">Analyse</div><div class="ar" style="top:86px"></div>
  <div class="it" style="top:106px">Projektionen</div><div class="ar" style="top:110px"></div>
  <div class="it" style="top:130px">Sonstiges</div><div class="ar" style="top:134px"></div>
  <div class="it" style="top:154px">Extraktion</div><div class="ar" style="top:158px"></div>
  <div class="it" style="top:178px">Konvertierung</div><div class="ar" style="top:182px"></div>
</div>
<!--LT--><div class="a" style="left:3px;top:201px;width:42px;height:2px;background-image:linear-gradient(90deg,#a8a8a8 50%,transparent 50%);background-size:4px 2px"></div>
<svg class="a" style="left:4px;top:213px" width="25" height="25" viewBox="0 0 25 25"><path d="M3 3l7 16l5-11l6 -5" fill="none" stroke="#333" stroke-width="1.3"/><circle cx="3" cy="3" r="2" fill="#fff" stroke="#333"/><circle cx="10" cy="19" r="2" fill="#fff" stroke="#333"/><circle cx="15" cy="8" r="2" fill="#fff" stroke="#333"/><circle cx="21" cy="3" r="2" fill="#fff" stroke="#333"/><rect x="14" y="15" width="10" height="10" rx="1.5" fill="#5a9a5a" stroke="#3a7a3a" stroke-width="0.8"/><path d="M19 16.8v6.4M15.8 20h6.4" stroke="#fff" stroke-width="1.8"/></svg>
<svg class="a" style="left:4px;top:243px" width="25" height="25" viewBox="0 0 25 25"><rect x="1" y="1" width="6" height="6" fill="#2d5a90"/><rect x="7" y="1" width="6" height="6" fill="#5b88c0"/><rect x="13" y="1" width="6" height="6" fill="#2d5a90"/><rect x="1" y="7" width="6" height="6" fill="#5b88c0"/><rect x="7" y="7" width="6" height="6" fill="#1c3b5e"/><rect x="1" y="13" width="6" height="6" fill="#2d5a90"/><rect x="7" y="13" width="6" height="6" fill="#a8c0e0"/><rect x="14" y="15" width="10" height="10" rx="1.5" fill="#5a9a5a" stroke="#3a7a3a" stroke-width="0.8"/><path d="M19 16.8v6.4M15.8 20h6.4" stroke="#fff" stroke-width="1.8"/></svg>
<svg class="a" style="left:4px;top:273px" width="25" height="25" viewBox="0 0 25 25"><rect x="1" y="1" width="21" height="20" fill="#a8c0e0" stroke="#2d5a90" stroke-width="1.3"/><path d="M1 11h21M11 1v20M1 1l10 10M11 1L1 11M11 11l11-10" stroke="#2d5a90" stroke-width="1.1"/><rect x="14" y="15" width="10" height="10" rx="1.5" fill="#5a9a5a" stroke="#3a7a3a" stroke-width="0.8"/><path d="M19 16.8v6.4M15.8 20h6.4" stroke="#fff" stroke-width="1.8"/></svg>
<svg class="a" style="left:4px;top:304px" width="25" height="25" viewBox="0 0 25 25"><path d="M6 3c4-2 8 1 6 6c-1 3-4 5-7 6c3-2 4-4 3-5c-3 0-4-5-2-7z" fill="#2d5a90"/><rect x="14" y="15" width="10" height="10" rx="1.5" fill="#5a9a5a" stroke="#3a7a3a" stroke-width="0.8"/><path d="M19 16.8v6.4M15.8 20h6.4" stroke="#fff" stroke-width="1.8"/></svg>
<svg class="a" style="left:4px;top:334px" width="25" height="25" viewBox="0 0 25 25"><path d="M2 22C4 14 10 4 20 1C19 8 14 16 6 18z" fill="#6a98cc" stroke="#3d6aa0"/><path d="M2 22L16 6" stroke="#2d5a90" stroke-width="1"/><rect x="14" y="15" width="10" height="10" rx="1.5" fill="#5a9a5a" stroke="#3a7a3a" stroke-width="0.8"/><path d="M19 16.8v6.4M15.8 20h6.4" stroke="#fff" stroke-width="1.8"/></svg>
<svg class="a" style="left:4px;top:364px" width="25" height="25" viewBox="0 0 25 25"><rect x="1" y="1" width="20" height="21" rx="3" fill="#a8c0e0" stroke="#5a7fb0"/><path d="M4 4l7 14l6-14" fill="none" stroke="#333" stroke-width="1.2"/><circle cx="4" cy="4" r="1.8" fill="#fff" stroke="#333"/><circle cx="11" cy="18" r="1.8" fill="#fff" stroke="#333"/><circle cx="17" cy="4" r="1.8" fill="#fff" stroke="#333"/><rect x="14" y="15" width="10" height="10" rx="1.5" fill="#5a9a5a" stroke="#3a7a3a" stroke-width="0.8"/><path d="M19 16.8v6.4M15.8 20h6.4" stroke="#fff" stroke-width="1.8"/></svg>
<svg class="a" style="left:4px;top:393px" width="25" height="25" viewBox="0 0 25 25"><path d="M2 5c0-4 5-4 8-3c3-1 8-1 9 2c1 3-1 6-3 7c0 3-1 6-3 6c-1 0-1-3-1-4c-2 0-3 0-4-1c-1 2-2 4-3 3c-1-1 0-3 1-4c-3-1-4-3-4-6z" fill="#3a6aa0" stroke="#1c3b5e"/><path d="M8 6c1 1 3 1 4 0" stroke="#fff" fill="none"/><rect x="14" y="15" width="10" height="10" rx="1.5" fill="#5a9a5a" stroke="#3a7a3a" stroke-width="0.8"/><path d="M19 16.8v6.4M15.8 20h6.4" stroke="#fff" stroke-width="1.8"/></svg>
<svg class="a" style="left:34px;top:402px" width="10" height="6" viewBox="0 0 10 6"><path d="M0 0h10L5 6z" fill="#222"/></svg>
<svg class="a" style="left:4px;top:423px" width="25" height="25" viewBox="0 0 25 25"><circle cx="12" cy="11" r="10.5" fill="#8ab0d8" stroke="#44668a" stroke-width="1.2"/><ellipse cx="12" cy="11" rx="4.5" ry="10.5" fill="none" stroke="#eef" stroke-width="1.3"/><path d="M1.5 11h21M3 6h18M3 16h18" stroke="#eef" stroke-width="1.3"/><rect x="14" y="15" width="10" height="10" rx="1.5" fill="#5a9a5a" stroke="#3a7a3a" stroke-width="0.8"/><path d="M19 16.8v6.4M15.8 20h6.4" stroke="#fff" stroke-width="1.8"/></svg>
<svg class="a" style="left:34px;top:432px" width="10" height="6" viewBox="0 0 10 6"><path d="M0 0h10L5 6z" fill="#222"/></svg>
<svg class="a" style="left:4px;top:453px" width="25" height="25" viewBox="0 0 25 25"><circle cx="12" cy="11" r="10.5" fill="#2d5a90" stroke="#1c3b5e" stroke-width="1.2"/><path d="M1.5 11h21M3 6h18M3 16h18" stroke="#eef" stroke-width="1.6"/><ellipse cx="12" cy="11" rx="4.5" ry="10.5" fill="none" stroke="#eef" stroke-width="1.3"/><rect x="14" y="15" width="10" height="10" rx="1.5" fill="#5a9a5a" stroke="#3a7a3a" stroke-width="0.8"/><path d="M19 16.8v6.4M15.8 20h6.4" stroke="#fff" stroke-width="1.8"/></svg>
<svg class="a" style="left:4px;top:483px" width="25" height="25" viewBox="0 0 25 25"><circle cx="12" cy="11" r="10.5" fill="#b8d0e8" stroke="#44668a" stroke-width="1.2"/><path d="M1.5 11h21M3 6h18M3 16h18" stroke="#eef" stroke-width="1"/><path d="M5 5l6 12l6-12" fill="none" stroke="#333" stroke-width="1.3"/><circle cx="5" cy="5" r="1.8" fill="#fff" stroke="#333"/><circle cx="17" cy="5" r="1.8" fill="#fff" stroke="#333"/><rect x="14" y="15" width="10" height="10" rx="1.5" fill="#5a9a5a" stroke="#3a7a3a" stroke-width="0.8"/><path d="M19 16.8v6.4M15.8 20h6.4" stroke="#fff" stroke-width="1.8"/></svg>
<svg class="a" style="left:34px;top:492px" width="10" height="6" viewBox="0 0 10 6"><path d="M0 0h10L5 6z" fill="#222"/></svg>
<svg class="a" style="left:4px;top:513px" width="25" height="25" viewBox="0 0 25 25"><path d="M3 3l7 16l5-11l6 -5" fill="none" stroke="#333" stroke-width="1.3"/><circle cx="3" cy="3" r="2" fill="#fff" stroke="#333"/><circle cx="10" cy="19" r="2" fill="#fff" stroke="#333"/><circle cx="15" cy="8" r="2" fill="#fff" stroke="#333"/><circle cx="21" cy="3" r="2" fill="#fff" stroke="#333"/><rect x="14" y="15" width="10" height="10" rx="1.5" fill="#e8c43a" stroke="#c9a020" stroke-width="0.8"/><path d="M19 16.8v6.4M16 18.4l6 3.2M16 21.6l6 -3.2" stroke="#fff" stroke-width="1.3"/></svg>
<svg class="a" style="left:34px;top:522px" width="10" height="6" viewBox="0 0 10 6"><path d="M0 0h10L5 6z" fill="#222"/></svg>
<svg class="a" style="left:11px;top:543px" width="25" height="25" viewBox="0 0 25 25"><rect x="1" y="1" width="19" height="19" fill="#4a80c0" stroke="#2d5a90"/><path d="M1 6h19M1 10.5h19M1 15h19M6 1v19M10.5 1v19M15 1v19" stroke="#dfe8f2" stroke-width="1"/><rect x="14" y="15" width="10" height="10" rx="1.5" fill="#5a9a5a" stroke="#3a7a3a" stroke-width="0.8"/><path d="M19 16.8v6.4M15.8 20h6.4" stroke="#fff" stroke-width="1.8"/></svg>
<svg class="a" style="left:6px;top:6px" width="22" height="22" viewBox="0 0 22 22"><circle cx="11" cy="10.5" r="7.3" fill="none" stroke="#6a9f38" stroke-width="3.6"/><path d="M12 12l7.5 7.5" stroke="#6a9f38" stroke-width="4" stroke-linecap="round"/><circle cx="10.5" cy="10.5" r="2.2" fill="#ee9030"/></svg>
<div class="a" style="left:1562px;top:16px;width:13px;height:1px;background:#111"></div>
<div class="a" style="left:1621px;top:11px;width:12px;height:12px;border:1px solid #111"></div>
<svg class="a" style="left:1680px;top:11px" width="13" height="13" viewBox="0 0 13 13"><path d="M0.5 0.5L12.5 12.5M12.5 0.5L0.5 12.5" stroke="#111" stroke-width="1.1"/></svg>
<div class="a" style="left:1716px;top:0;width:1px;height:1026px;background:#8a8a8a"></div>
<div class="a" style="left:1717px;top:0;width:3px;height:1026px;background:#d6d6d6"></div>
<div class="a" style="left:1717px;top:264px;width:3px;height:32px;background:#3a7a6a"></div>
<svg class="a" style="left:678px;top:68px" width="106" height="18" viewBox="0 0 106 18"><path d="M104 9H22" stroke="#e01010" stroke-width="3" stroke-linecap="round"/><path d="M4 9L28 2L22 9L28 16z" fill="#e01010"/></svg>
<svg class="a" style="left:541px;top:67px" width="20" height="20" viewBox="0 0 20 20"><rect x="1" y="1" width="5" height="5" fill="#2d5a90"/><rect x="6" y="1" width="5" height="5" fill="#8fb0d8"/><rect x="1" y="6" width="5" height="5" fill="#8fb0d8"/><path d="M8 7h11v12H3v-6h5z" fill="#5b88c0"/><path d="M11 9h3M15 9h3" stroke="#d03030" stroke-width="1.6"/><path d="M4 14h14M4 17h14" stroke="#ddd" stroke-width="1"/></svg>
<svg class="a" style="left:541px;top:117px" width="20" height="20" viewBox="0 0 20 20"><path d="M5 1v19M14 1v19M1 5h19M1 14h19" stroke="#333" stroke-width="1.3"/><path d="M3 18l6-10" stroke="#888" stroke-width="1"/></svg><!--/LT-->
</body></html>
